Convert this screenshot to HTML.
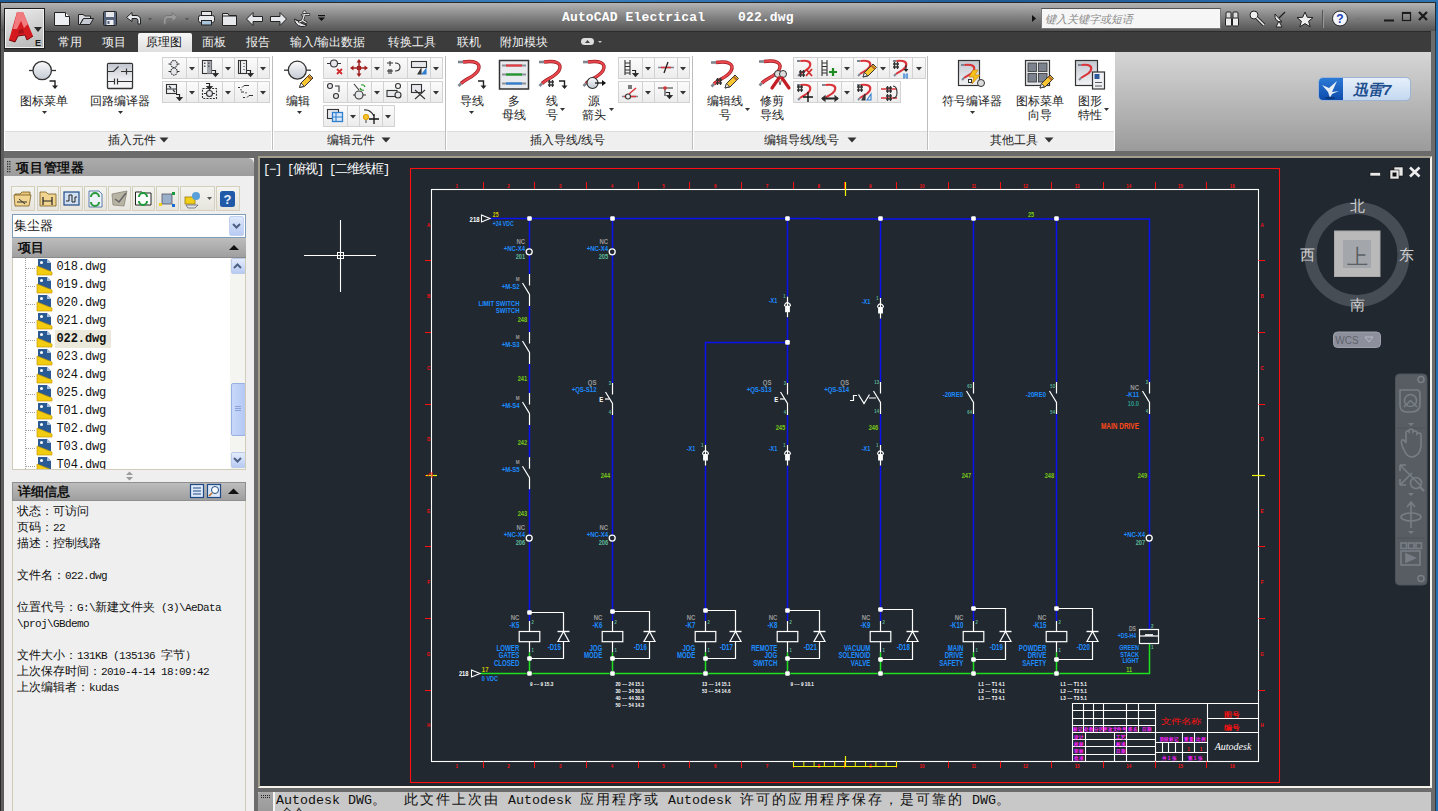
<!DOCTYPE html>
<html><head><meta charset="utf-8">
<style>
*{box-sizing:border-box;margin:0;padding:0}
html,body{width:1438px;height:811px;overflow:hidden;background:#6b6b6b;font-family:"Liberation Sans",sans-serif;}
.a{position:absolute}
#winbg{left:0;top:0;width:1438px;height:2px;background:linear-gradient(90deg,#1d5a96,#3b7fbf 40%,#1d5a96 70%,#2f73b3)}
#title{left:0;top:2px;width:1436px;height:29px;background:linear-gradient(#b4b4b4,#828282 50%,#545454);border-top:1px solid #2a2a2a;border-left:1px solid #2a2a2a;border-right:1px solid #2a2a2a}
#tabs{left:0;top:31px;width:1438px;height:21px;background:#3c3c3c;border-top:1px solid #2c2c2c}
#ribbon{left:4px;top:52px;width:1111px;height:99px;background:#fff}
#ribgray{left:1115px;top:52px;width:316px;height:99px;background:linear-gradient(#d6d6d6,#9b9b9b)}
#rbframe{left:1431px;top:31px;width:7px;height:780px;background:linear-gradient(90deg,#6b6b6b 0,#6b6b6b 4px,#3a3a3a 4px,#3a3a3a 5px,#1f6fb8 5px)}
#leftedge{left:0;top:31px;width:4px;height:780px;background:#5e5e5e;border-left:1px solid #2a2a2a}
.pband{top:131px;height:19px;background:#efefef;border-top:1px solid #dcdcdc;color:#222;font-size:12px;line-height:18px;text-align:center}
.psep{top:56px;width:1px;height:94px;background:#bdbdbd}
#pal{left:4px;top:158px;width:250px;height:653px;background:#efefef}
#dwg{left:258px;top:156px;width:1174px;height:632px;background:#212830;border:2px solid #a39f8f;border-bottom-color:#f4f2ea;border-right-color:#f4f2ea}
#cmd{left:258px;top:792px;width:1173px;height:19px;background:#c8c8c8}
.tab{top:34px;font-size:12px;line-height:16px;color:#f0f0f0;white-space:nowrap}
.ptitle{top:132px;font-size:12px;line-height:17px;color:#222;white-space:nowrap}
.cell{background:linear-gradient(#fbfbfb,#ececec);border:1px solid #d2d2d2}
.blbl{width:120px;text-align:center;font-size:12px;line-height:14px;color:#222;white-space:nowrap}
.dl{font-size:12px;line-height:16px;color:#111;white-space:nowrap}
.m{font-family:"Liberation Mono",monospace;font-size:11px;letter-spacing:-.6px}
.cm{font-family:"Liberation Mono",monospace;font-size:13.33px}
.ck{font-size:14px;letter-spacing:2px}
.cmdl{line-height:17px;color:#111;white-space:pre;font-family:"Liberation Mono",monospace}
.vm{font-family:"Liberation Mono",monospace;font-size:12px;letter-spacing:-1.2px}
.vk{font-size:13px;letter-spacing:-1px}
</style></head><body>
<div class="a" style="left:1436px;top:0;width:2px;height:811px;background:#1f6fb8"></div><div id="winbg" class="a"></div>
<div id="title" class="a"></div>
<div id="tabs" class="a"></div>
<div id="leftedge" class="a"></div>
<!-- app button -->
<div class="a" style="left:4px;top:8px;width:41px;height:41px;background:linear-gradient(160deg,#ececec 0%,#d4d4d4 45%,#b4b4b4 100%);border:1px solid #1e1e1e;box-shadow:inset 0 0 0 1px #f0f0f0">
<svg width="39" height="39" style="position:absolute;left:0;top:0">
<path d="M12,3 L18,3 L28,27 L22,31 L20,26 L13,27 L10,33 L4,31 Z" fill="#d41a1f"/>
<path d="M12,3 L18,3 L23,15 L19,19 L16,12 L12,20 L8,20 Z" fill="#f07a7e"/>
<path d="M14,21 L18,20 L19,24 L13,25 Z" fill="#a51217"/>
<path d="M4,31 L10,33 L13,27 L20,26 L22,31 L28,27" fill="none" stroke="#7a0a0e" stroke-width="1"/>
<path d="M29,18 H37 L33,23 Z" fill="#2a2a2a"/>
<text x="30" y="37" font-family="Liberation Sans" font-weight="bold" font-size="9" fill="#1a1a1a">E</text>
</svg></div>
<svg class="a" style="left:50px;top:8px" width="280" height="22">
<!-- new -->
<path d="M4.5,4.5 H15.5 L19.5,8.5 V17.5 H4.5 Z" fill="#eceef2" stroke="#222" stroke-width="1"/>
<path d="M15.5,4.5 V8.5 H19.5" fill="#fff" stroke="#222"/>
<!-- open -->
<path d="M28.5,6.5 H33 L35,8 H40.5 V11 H33 L30,16.5 H28.5 Z" fill="#d8dbe0" stroke="#222"/>
<path d="M30,16.5 L33.5,10.5 H43.5 L40,16.5 Z" fill="#c6cad2" stroke="#222"/>
<!-- save -->
<rect x="53.5" y="3.5" width="13" height="14" rx="1" fill="#56637a" stroke="#222"/>
<rect x="56" y="4" width="8" height="5" fill="#e6e8ec"/>
<rect x="56.5" y="12" width="7" height="5" fill="#eef0f3"/>
<rect x="57.5" y="13" width="2" height="3" fill="#56637a"/>
<!-- undo -->
<path d="M76.5,9.5 L82,4.5 V7.5 H86 Q90.5,7.5 90.5,12 V16 H88 V12.5 Q88,10.5 86,10.5 H82 V13.5 Z" fill="#e6e8ec" stroke="#222"/>
<path d="M98,10 L102,10 L100,12.5Z" fill="#555"/>
<!-- redo gray -->
<path d="M127.5,9.5 L122,4.5 V7.5 H118 Q113.5,7.5 113.5,12 V16 H116 V12.5 Q116,10.5 118,10.5 H122 V13.5 Z" fill="#9a9a9a" stroke="#777"/>
<path d="M135,10 L139,10 L137,12.5Z" fill="#555"/>
<!-- plot -->
<rect x="151.5" y="3.5" width="10" height="4" fill="#e6e8ec" stroke="#222"/>
<rect x="148.5" y="7.5" width="16" height="7" rx="2" fill="#e6e8ec" stroke="#222"/>
<rect x="151.5" y="12.5" width="10" height="4.5" fill="#a8c4da" stroke="#222"/>
<!-- folder -->
<path d="M172.5,5.5 H178 L179,7.5 H186.5 V17.5 H172.5 Z" fill="#e6e8ec" stroke="#222"/>
<line x1="173" y1="8" x2="186" y2="8" stroke="#222"/>
<!-- back -->
<path d="M196.5,11 L203,4.5 V8.5 H212.5 V13.5 H203 V17.5 Z" fill="#e6e8ec" stroke="#222"/>
<!-- forward -->
<path d="M236.5,11 L230,4.5 V8.5 H220.5 V13.5 H230 V17.5 Z" fill="#e6e8ec" stroke="#222"/>
<!-- surfer -->
<path d="M244.5,11 Q245,17 251,18.5 Q255,19 257,17 Q251,16 248,13 Q246,11 244.5,11Z" fill="#e6e8ec" stroke="#222" stroke-width="1"/>
<path d="M246,12.5 Q249,12 251,14" stroke="#222" stroke-width=".8" fill="none"/>
<circle cx="254.5" cy="4.5" r="1.7" fill="#eee" stroke="#222" stroke-width=".8"/>
<path d="M252,7 L259,6.5 M254.5,6.5 L252.5,12.5 L256,14.5 M252.5,12.5 L249.5,14" stroke="#222" stroke-width="2.6" fill="none" stroke-linecap="round"/>
<path d="M252,7 L259,6.5 M254.5,6.5 L252.5,12.5 L256,14.5 M252.5,12.5 L249.5,14" stroke="#eee" stroke-width="1.2" fill="none" stroke-linecap="round"/>
<!-- dropdown -->
<rect x="268" y="7" width="7" height="1.2" fill="#111"/>
<path d="M268,9.5 H275 L271.5,13Z" fill="#111"/>
</svg>
<div class="a" style="left:562px;top:10px;letter-spacing:.15px;font-family:'Liberation Mono',monospace;font-weight:bold;font-size:13px;color:#fff;line-height:16px;white-space:pre">AutoCAD Electrical</div>
<div class="a" style="left:738px;top:10px;letter-spacing:.15px;font-family:'Liberation Mono',monospace;font-weight:bold;font-size:13px;color:#fff;line-height:16px;white-space:pre">022.dwg</div>
<svg class="a" style="left:1030px;top:12px" width="8" height="12"><path d="M2,3 L6,6.5 L2,10Z" fill="#111"/></svg>
<div class="a" style="left:1041px;top:8px;width:180px;height:21px;background:#f6f6f6;border:1px solid #7a7a7a;border-top-color:#555"></div>
<div class="a" style="left:1045px;top:12px;font-size:11px;line-height:15px;color:#8a8a8a;font-style:italic">键入关键字或短语</div>
<svg class="a" style="left:1222px;top:8px" width="216" height="22">
<!-- binoculars -->
<rect x="4" y="4" width="5" height="7" rx="1" fill="#ddd" stroke="#222"/>
<rect x="11" y="4" width="5" height="7" rx="1" fill="#ddd" stroke="#222"/>
<rect x="3.5" y="10" width="6" height="8" rx="1" fill="#eee" stroke="#222"/>
<rect x="10.5" y="10" width="6" height="8" rx="1" fill="#eee" stroke="#222"/>
<!-- key -->
<circle cx="32" cy="7" r="4" fill="#eee" stroke="#222"/>
<path d="M34.5,9.5 L42,17" stroke="#222" stroke-width="3.2"/>
<path d="M34.5,9.5 L42,17" stroke="#eee" stroke-width="1.6"/>
<!-- satellite -->
<path d="M53,6 Q52,14 60,14 Z" fill="#eee" stroke="#222"/>
<path d="M57,10 L63,4" stroke="#222" stroke-width="1.2"/>
<path d="M54,19 L57,13 L60,19Z" fill="#eee" stroke="#222"/>
<!-- star -->
<path d="M83,4 L85.3,9.3 L91,9.6 L86.6,13.2 L88.2,18.8 L83,15.6 L77.8,18.8 L79.4,13.2 L75,9.6 L80.7,9.3Z" fill="#eee" stroke="#222"/>
<line x1="100.5" y1="2" x2="100.5" y2="20" stroke="#555"/>
<line x1="101.5" y1="2" x2="101.5" y2="20" stroke="#999"/>
<!-- help -->
<circle cx="118" cy="10.5" r="7.5" fill="#f4f6fb" stroke="#222"/>
<text x="118" y="15" text-anchor="middle" font-family="Liberation Sans" font-weight="bold" font-size="12" fill="#1a3fb5">?</text>
<path d="M134,10 H139 L136.5,12.5Z" fill="#777"/>
<!-- min max close -->
<rect x="162" y="11.5" width="10" height="2" fill="#1a1a1a"/>
<rect x="180.5" y="4.5" width="8" height="8" fill="none" stroke="#1a1a1a" stroke-width="1.2"/>
<rect x="180" y="4" width="9" height="2" fill="#1a1a1a"/>
<path d="M197,4 L205,12 M205,4 L197,12" stroke="#1a1a1a" stroke-width="2.2"/>
</svg>
<!-- tabs -->
<div class="a" style="left:138px;top:33px;width:54px;height:19px;background:linear-gradient(#f7f7f7,#dedede);border-radius:2px 2px 0 0"></div>
<div class="a tab" style="left:58px">常用</div>
<div class="a tab" style="left:102px">项目</div>
<div class="a tab" style="left:146px;color:#111">原理图</div>
<div class="a tab" style="left:202px">面板</div>
<div class="a tab" style="left:246px">报告</div>
<div class="a tab" style="left:290px">输入/输出数据</div>
<div class="a tab" style="left:388px">转换工具</div>
<div class="a tab" style="left:457px">联机</div>
<div class="a tab" style="left:500px">附加模块</div>
<svg class="a" style="left:578px;top:36px" width="28" height="12"><rect x="3" y="2" width="13" height="7" rx="3.5" fill="#ddd"/><path d="M7,7 L9.5,4 L12,7Z" fill="#444"/><path d="M20,5 H24 L22,7Z" fill="#ccc"/></svg>

<div id="ribbon" class="a"></div>
<div id="ribgray" class="a"></div>
<!--RIBBON-->
<div class="a pband" style="left:5px;width:266px"></div>
<div class="a pband" style="left:274px;width:171px"></div>
<div class="a pband" style="left:447px;width:245px"></div>
<div class="a pband" style="left:694px;width:233px"></div>
<div class="a pband" style="left:929px;width:185px"></div>
<div class="a psep" style="left:272px"></div>
<div class="a psep" style="left:445px"></div>
<div class="a psep" style="left:692px"></div>
<div class="a psep" style="left:927px"></div>
<div class="a ptitle" style="left:108px">插入元件</div>
<svg class="a" style="left:159px;top:137px" width="10" height="6"><path d="M0.5,0.5 H9.5 L5,5.5Z" fill="#333"/></svg>
<div class="a ptitle" style="left:327px">编辑元件</div>
<svg class="a" style="left:381px;top:137px" width="10" height="6"><path d="M0.5,0.5 H9.5 L5,5.5Z" fill="#333"/></svg>
<div class="a ptitle" style="left:530px">插入导线/线号</div>
<div class="a ptitle" style="left:764px">编辑导线/线号</div>
<svg class="a" style="left:847px;top:137px" width="10" height="6"><path d="M0.5,0.5 H9.5 L5,5.5Z" fill="#333"/></svg>
<div class="a ptitle" style="left:990px">其他工具</div>
<svg class="a" style="left:1044px;top:137px" width="10" height="6"><path d="M0.5,0.5 H9.5 L5,5.5Z" fill="#333"/></svg>
<div class="a cell" style="left:162px;top:57px;width:25px;height:22px"></div>
<div class="a cell" style="left:186px;top:57px;width:13px;height:22px"></div>
<svg class="a" style="left:189.0px;top:66.5px" width="7" height="5"><path d="M0,0 H6 L3,3.5Z" fill="#333"/></svg>
<div class="a cell" style="left:198px;top:57px;width:25px;height:22px"></div>
<div class="a cell" style="left:222px;top:57px;width:13px;height:22px"></div>
<svg class="a" style="left:225.0px;top:66.5px" width="7" height="5"><path d="M0,0 H6 L3,3.5Z" fill="#333"/></svg>
<div class="a cell" style="left:234px;top:57px;width:24px;height:22px"></div>
<div class="a cell" style="left:257px;top:57px;width:13px;height:22px"></div>
<svg class="a" style="left:260.0px;top:66.5px" width="7" height="5"><path d="M0,0 H6 L3,3.5Z" fill="#333"/></svg>
<div class="a cell" style="left:162px;top:81px;width:25px;height:22px"></div>
<div class="a cell" style="left:186px;top:81px;width:13px;height:22px"></div>
<svg class="a" style="left:189.0px;top:90.5px" width="7" height="5"><path d="M0,0 H6 L3,3.5Z" fill="#333"/></svg>
<div class="a cell" style="left:198px;top:81px;width:25px;height:22px"></div>
<div class="a cell" style="left:222px;top:81px;width:13px;height:22px"></div>
<svg class="a" style="left:225.0px;top:90.5px" width="7" height="5"><path d="M0,0 H6 L3,3.5Z" fill="#333"/></svg>
<div class="a cell" style="left:234px;top:81px;width:24px;height:22px"></div>
<div class="a cell" style="left:257px;top:81px;width:13px;height:22px"></div>
<svg class="a" style="left:260.0px;top:90.5px" width="7" height="5"><path d="M0,0 H6 L3,3.5Z" fill="#333"/></svg>
<div class="a cell" style="left:323px;top:57px;width:25px;height:22px"></div>
<div class="a cell" style="left:347px;top:57px;width:25px;height:22px"></div>
<div class="a cell" style="left:371px;top:57px;width:13px;height:22px"></div>
<svg class="a" style="left:374.0px;top:66.5px" width="7" height="5"><path d="M0,0 H6 L3,3.5Z" fill="#333"/></svg>
<div class="a cell" style="left:383px;top:57px;width:25px;height:22px"></div>
<div class="a cell" style="left:407px;top:57px;width:24px;height:22px"></div>
<div class="a cell" style="left:430px;top:57px;width:13px;height:22px"></div>
<svg class="a" style="left:433.0px;top:66.5px" width="7" height="5"><path d="M0,0 H6 L3,3.5Z" fill="#333"/></svg>
<div class="a cell" style="left:323px;top:81px;width:25px;height:22px"></div>
<div class="a cell" style="left:347px;top:81px;width:25px;height:22px"></div>
<div class="a cell" style="left:371px;top:81px;width:13px;height:22px"></div>
<svg class="a" style="left:374.0px;top:90.5px" width="7" height="5"><path d="M0,0 H6 L3,3.5Z" fill="#333"/></svg>
<div class="a cell" style="left:383px;top:81px;width:25px;height:22px"></div>
<div class="a cell" style="left:407px;top:81px;width:24px;height:22px"></div>
<div class="a cell" style="left:430px;top:81px;width:13px;height:22px"></div>
<svg class="a" style="left:433.0px;top:90.5px" width="7" height="5"><path d="M0,0 H6 L3,3.5Z" fill="#333"/></svg>
<div class="a cell" style="left:323px;top:105px;width:25px;height:22px"></div>
<div class="a cell" style="left:347px;top:105px;width:13px;height:22px"></div>
<svg class="a" style="left:350.0px;top:114.5px" width="7" height="5"><path d="M0,0 H6 L3,3.5Z" fill="#333"/></svg>
<div class="a cell" style="left:359px;top:105px;width:24px;height:22px"></div>
<div class="a cell" style="left:382px;top:105px;width:13px;height:22px"></div>
<svg class="a" style="left:385.0px;top:114.5px" width="7" height="5"><path d="M0,0 H6 L3,3.5Z" fill="#333"/></svg>
<div class="a cell" style="left:618px;top:57px;width:25px;height:22px"></div>
<div class="a cell" style="left:642px;top:57px;width:13px;height:22px"></div>
<svg class="a" style="left:645.0px;top:66.5px" width="7" height="5"><path d="M0,0 H6 L3,3.5Z" fill="#333"/></svg>
<div class="a cell" style="left:654px;top:57px;width:24px;height:22px"></div>
<div class="a cell" style="left:677px;top:57px;width:13px;height:22px"></div>
<svg class="a" style="left:680.0px;top:66.5px" width="7" height="5"><path d="M0,0 H6 L3,3.5Z" fill="#333"/></svg>
<div class="a cell" style="left:618px;top:81px;width:25px;height:22px"></div>
<div class="a cell" style="left:642px;top:81px;width:13px;height:22px"></div>
<svg class="a" style="left:645.0px;top:90.5px" width="7" height="5"><path d="M0,0 H6 L3,3.5Z" fill="#333"/></svg>
<div class="a cell" style="left:654px;top:81px;width:24px;height:22px"></div>
<div class="a cell" style="left:677px;top:81px;width:13px;height:22px"></div>
<svg class="a" style="left:680.0px;top:90.5px" width="7" height="5"><path d="M0,0 H6 L3,3.5Z" fill="#333"/></svg>
<div class="a cell" style="left:793px;top:57px;width:25px;height:22px"></div>
<div class="a cell" style="left:817px;top:57px;width:25px;height:22px"></div>
<div class="a cell" style="left:841px;top:57px;width:13px;height:22px"></div>
<svg class="a" style="left:844.0px;top:66.5px" width="7" height="5"><path d="M0,0 H6 L3,3.5Z" fill="#333"/></svg>
<div class="a cell" style="left:853px;top:57px;width:25px;height:22px"></div>
<div class="a cell" style="left:877px;top:57px;width:13px;height:22px"></div>
<svg class="a" style="left:880.0px;top:66.5px" width="7" height="5"><path d="M0,0 H6 L3,3.5Z" fill="#333"/></svg>
<div class="a cell" style="left:889px;top:57px;width:24px;height:22px"></div>
<div class="a cell" style="left:912px;top:57px;width:14px;height:22px"></div>
<svg class="a" style="left:915.5px;top:66.5px" width="7" height="5"><path d="M0,0 H6 L3,3.5Z" fill="#333"/></svg>
<div class="a cell" style="left:793px;top:81px;width:25px;height:22px"></div>
<div class="a cell" style="left:817px;top:81px;width:25px;height:22px"></div>
<div class="a cell" style="left:841px;top:81px;width:13px;height:22px"></div>
<svg class="a" style="left:844.0px;top:90.5px" width="7" height="5"><path d="M0,0 H6 L3,3.5Z" fill="#333"/></svg>
<div class="a cell" style="left:853px;top:81px;width:25px;height:22px"></div>
<div class="a cell" style="left:877px;top:81px;width:24px;height:22px"></div>
<div class="a blbl" style="left:-16px;top:94px">图标菜单</div>
<svg class="a" style="left:41.5px;top:111px" width="6" height="4"><path d="M0,0 H5 L2.5,3Z" fill="#333"/></svg>
<div class="a blbl" style="left:60px;top:94px">回路编译器</div>
<svg class="a" style="left:117.5px;top:111px" width="6" height="4"><path d="M0,0 H5 L2.5,3Z" fill="#333"/></svg>
<div class="a blbl" style="left:238px;top:94px">编辑</div>
<svg class="a" style="left:296.5px;top:111px" width="6" height="4"><path d="M0,0 H5 L2.5,3Z" fill="#333"/></svg>
<div class="a blbl" style="left:412px;top:94px">导线</div>
<svg class="a" style="left:469px;top:111px" width="6" height="4"><path d="M0,0 H5 L2.5,3Z" fill="#333"/></svg>
<div class="a blbl" style="left:453.5px;top:94px">多</div>
<div class="a blbl" style="left:453.5px;top:108px">母线</div>
<div class="a blbl" style="left:491.5px;top:94px">线</div>
<div class="a blbl" style="left:491.5px;top:108px">号</div>
<svg class="a" style="left:560px;top:108px" width="6" height="4"><path d="M0,0 H5 L2.5,3Z" fill="#333"/></svg>
<div class="a blbl" style="left:534px;top:94px">源</div>
<div class="a blbl" style="left:534px;top:108px">箭头</div>
<svg class="a" style="left:609px;top:108px" width="6" height="4"><path d="M0,0 H5 L2.5,3Z" fill="#333"/></svg>
<div class="a blbl" style="left:664.5px;top:94px">编辑线</div>
<div class="a blbl" style="left:665px;top:108px">号</div>
<svg class="a" style="left:745px;top:108px" width="6" height="4"><path d="M0,0 H5 L2.5,3Z" fill="#333"/></svg>
<div class="a blbl" style="left:712px;top:94px">修剪</div>
<div class="a blbl" style="left:712px;top:108px">导线</div>
<div class="a blbl" style="left:911.5px;top:94px">符号编译器</div>
<svg class="a" style="left:969.5px;top:111px" width="6" height="4"><path d="M0,0 H5 L2.5,3Z" fill="#333"/></svg>
<div class="a blbl" style="left:980px;top:94px">图标菜单</div>
<div class="a blbl" style="left:980px;top:108px">向导</div>
<div class="a blbl" style="left:1029.5px;top:94px">图形</div>
<div class="a blbl" style="left:1029.5px;top:108px">特性</div>
<svg class="a" style="left:1104px;top:108px" width="6" height="4"><path d="M0,0 H5 L2.5,3Z" fill="#333"/></svg>
<!--RIBICONS--><svg class="a" style="left:0;top:0;pointer-events:none" width="1438" height="152">
<defs>
<linearGradient id="gcirc" x1="0" y1="0" x2="0" y2="1"><stop offset="0" stop-color="#fafbfc"/><stop offset="1" stop-color="#c4c9d3"/></linearGradient>
<linearGradient id="gbox" x1="0" y1="0" x2="0" y2="1"><stop offset="0" stop-color="#c3c7d0"/><stop offset="1" stop-color="#f2f3f5"/></linearGradient>
<g id="wB">
<path d="M0,1.5 H5" stroke="#7d8590" stroke-width="2.6" fill="none"/>
<path d="M5,1.5 C 16,0 24,2 20,10 C 17,16 8,18 3,23" stroke="#9e1b20" stroke-width="3.4" fill="none"/>
<path d="M5,1.5 C 16,0 24,2 20,10 C 17,16 8,18 3,23" stroke="#e8474d" stroke-width="2" fill="none"/>
<path d="M3,23 L0.5,25.5" stroke="#7d8590" stroke-width="2.6"/>
</g>
<g id="wS">
<path d="M0,1 H3.5" stroke="#7d8590" stroke-width="2" fill="none"/>
<path d="M3.5,1 C 11,0 15,2 12.5,7 C 10.5,10.5 6,11.5 3,14" stroke="#d9343a" stroke-width="2.2" fill="none"/>
<path d="M3,14 L1,16" stroke="#7d8590" stroke-width="2"/>
</g>
<g id="arr"><path d="M0,0.5 H5.5 V6" stroke="#222" stroke-width="1.4" fill="none"/><path d="M2.5,5 H8.5 L5.5,8.5Z" fill="#222"/></g>
<g id="arrS"><path d="M0,0.5 H3.5 V4" stroke="#222" stroke-width="1.2" fill="none"/><path d="M1,3.5 H6 L3.5,6.5Z" fill="#222"/></g>
<g id="pen"><path d="M0,13 L1.5,8.5 L10,0 L13.5,3.5 L5,12 Z" fill="#f7c531" stroke="#333" stroke-width="1"/><path d="M0,13 L1.5,8.5 L4.5,11.5Z" fill="#eee" stroke="#333" stroke-width=".8"/><path d="M8.5,1.5 L12,5" stroke="#b36a2a" stroke-width="2"/></g>
<g id="hash"><path d="M1.5,0 V7 M4.5,0 V7 M0,2 H6 M0,5 H6" stroke="#333" stroke-width="1.3"/></g>
</defs>
<!-- 图标菜单 -->
<line x1="29" y1="70.5" x2="33" y2="70.5" stroke="#333" stroke-width="1.3"/>
<line x1="51.5" y1="70.5" x2="56" y2="70.5" stroke="#333" stroke-width="1.3"/>
<circle cx="42.2" cy="70.5" r="9.2" fill="url(#gcirc)" stroke="#333" stroke-width="1.3"/>
<use href="#arr" x="49.5" y="80.5"/>
<!-- 回路编译器 -->
<rect x="107.5" y="63.5" width="25" height="25" rx="1" fill="#f4f5f7" stroke="#333" stroke-width="1.3"/>
<rect x="108.2" y="64.2" width="23.6" height="17.3" fill="url(#gbox)"/>
<path d="M108,71.5 H113.5 L118.5,66.5 M121,71.5 H132 M126.5,68.5 V74.5 M108,81.5 H114.5 M114.5,78.5 V84.5 M117.5,78.5 V84.5 M117.5,81.5 H132" stroke="#333" stroke-width="1.2" fill="none"/>
<!-- 编辑 -->
<line x1="284" y1="70.2" x2="288.5" y2="70.2" stroke="#333" stroke-width="1.3"/>
<line x1="306" y1="70.2" x2="311" y2="70.2" stroke="#333" stroke-width="1.3"/>
<circle cx="297.3" cy="70.2" r="9" fill="url(#gcirc)" stroke="#333" stroke-width="1.3"/>
<use href="#pen" x="299.5" y="74.5"/>
<!-- 导线 -->
<use href="#wB" x="458" y="60.5"/>
<use href="#arr" x="478" y="80.5"/>
<!-- 多母线 -->
<rect x="499.5" y="60.5" width="29" height="28.5" fill="#e8eaee" stroke="#333" stroke-width="1.5"/>
<path d="M502,65.5 H526 M502,74.5 H526 M502,83.5 H526" stroke="#8a9098" stroke-width="2.2"/>
<path d="M506,65.5 H522" stroke="#e23b40" stroke-width="2.2"/>
<path d="M506,74.5 H522" stroke="#1f9a2a" stroke-width="2.2"/>
<path d="M506,83.5 H522" stroke="#2f7fd0" stroke-width="2.2"/>
<!-- 线号 -->
<use href="#wB" x="539" y="60.5"/>
<use href="#hash" x="548" y="80"/>
<use href="#arr" x="559" y="80.5"/>
<!-- 源箭头 -->
<use href="#wB" x="583" y="60.5"/>
<circle cx="592.5" cy="83" r="5.5" fill="url(#gcirc)" stroke="#333" stroke-width="1.2"/>
<path d="M595,83 H603" stroke="#111" stroke-width="1.3"/><path d="M602,80 L606,83 L602,86Z" fill="#111"/>
<!-- 编辑线号 -->
<use href="#wB" x="711" y="61"/>
<use href="#hash" x="716" y="78"/>
<use href="#pen" x="725" y="75"/>
<!-- 修剪导线 -->
<use href="#wB" x="759" y="60"/>
<path d="M776,71 L780,85 M784,71 L780,85" stroke="#666" stroke-width="1"/>
<circle cx="778" cy="74" r="3.5" fill="#ddd" stroke="#333"/><circle cx="783" cy="74" r="3.5" fill="#ddd" stroke="#333"/>
<path d="M779,78 L772,88 M782,78 L789,88" stroke="#c41e24" stroke-width="3.2" stroke-linecap="round"/>
<!-- 符号编译器 -->
<rect x="958.5" y="60.5" width="21" height="25" fill="url(#gbox)" stroke="#333" stroke-width="1.2" transform="scale(1,1)"/>
<use href="#wS" x="961" y="64"/>
<path d="M973,70 L978,70 L975,75 L980,75 L972,84 L974,77 L969,77Z" fill="#f6c21c" stroke="#c47a00" stroke-width=".6"/>
<rect x="968.5" y="79.5" width="3" height="3" fill="#fff" stroke="#333"/>
<circle cx="981" cy="83" r="3.5" fill="#ddd" stroke="#333"/>
<!-- 图标菜单向导 -->
<rect x="1025.5" y="60.5" width="24" height="25" fill="#e6e8ec" stroke="#333" stroke-width="1.2"/>
<rect x="1028" y="63" width="8.5" height="8.5" fill="#7d838e" stroke="#333" stroke-width=".8"/>
<rect x="1038.5" y="63" width="8.5" height="8.5" fill="#7d838e" stroke="#333" stroke-width=".8"/>
<rect x="1028" y="73.5" width="8.5" height="8.5" fill="#7d838e" stroke="#333" stroke-width=".8"/>
<rect x="1038.5" y="73.5" width="8.5" height="8.5" fill="#7d838e" stroke="#333" stroke-width=".8"/>
<use href="#pen" x="1040" y="75"/>
<!-- 图形特性 -->
<rect x="1075.5" y="60.5" width="22" height="25" fill="url(#gbox)" stroke="#333" stroke-width="1.2"/>
<use href="#wS" x="1078" y="64"/>
<rect x="1092.5" y="72" width="12" height="17" fill="#eef0f3" stroke="#333" stroke-width="1.2"/>
<rect x="1094.5" y="74" width="5" height="5" fill="#2d5a9a"/>
<path d="M1095,82.5 H1102 M1095,86 H1102" stroke="#333" stroke-width=".8"/>

<!-- small icons panel 1 -->
<g stroke="#333" stroke-width="1.1" fill="none">
<ellipse cx="174" cy="64" rx="3.2" ry="3.6" fill="#e6e8ec" stroke-dasharray="1.5,.8"/><ellipse cx="174" cy="71.5" rx="3.2" ry="3.6" fill="#e6e8ec" stroke-dasharray="1.5,.8"/>
<path d="M168.5,64 H171 M177,64 H179.5 M168.5,71.5 H171 M177,71.5 H179.5"/>
<rect x="202.5" y="60.5" width="9" height="13" fill="#eef0f2"/><rect x="207" y="61" width="4.5" height="12.5" fill="#a4a8ae" stroke="none"/>
<rect x="204" y="62.5" width="1.5" height="1.5" fill="#555" stroke="none"/><rect x="208" y="62.5" width="1.5" height="1.5" fill="#555" stroke="none"/><rect x="204" y="65.5" width="1.5" height="1.5" fill="#555" stroke="none"/><rect x="208" y="65.5" width="1.5" height="1.5" fill="#555" stroke="none"/>
<use href="#arrS" x="212" y="70"/>
<rect x="238.5" y="60.5" width="8" height="13" fill="#eef0f2"/><path d="M240.5,61 V73 M244,63 V64 M244,66 V67 M244,69 V70"/>
<use href="#arrS" x="247" y="70"/>
<rect x="166.5" y="84.5" width="10" height="9" fill="#eef0f2"/><path d="M167,89 H176 M169,86 L171,88 M173,90 L175,92"/>
<use href="#arrS" x="176" y="94"/>
<rect x="202.5" y="88.5" width="14" height="10" stroke-dasharray="2,1.2"/><circle cx="209.5" cy="93.5" r="3" fill="#e6e8ec"/><path d="M204,93.5 H206.5 M212.5,93.5 H215"/>
<use href="#arrS" x="206" y="83"/>
<path d="M238,87.5 H240 M242,87.5 L244,85.5 H249 M241,89 V90.5 M241,92 H244 M246,92 V93.5 M243,97.5 H245 M247,97.5 L249,95.5 H253" stroke-width="1"/>
</g>
<!-- small icons panel 2 -->
<g stroke="#333" stroke-width="1.1" fill="none">
<circle cx="334" cy="63.5" r="3.5" fill="#e6e8ec"/><path d="M327,63.5 H330 M338,63.5 H341"/>
<path d="M337,69 L342,74 M342,69 L337,74" stroke="#d02a2a" stroke-width="1.8"/>
<path d="M359,61 V75 M352,68 H366" stroke="#a01e1e" stroke-width="1.5"/><path d="M359,59 L356.5,62.5 H361.5Z M359,77 L356.5,73.5 H361.5Z M350,68 L353.5,65.5 V70.5Z M368,68 L364.5,65.5 V70.5Z" fill="#a01e1e" stroke="none"/><rect x="357.5" y="66.5" width="3" height="3" stroke="#a01e1e"/>
<path d="M387,63 H393 M390,61 V66 M387,71 H393 M389,69 V74 M391,69 V74 M395,63 Q400,63 400,67 Q400,71 395,71"/>
<rect x="411.5" y="61.5" width="15" height="6" fill="#e6e8ec"/><path d="M418,74 L421,69 V74Z" fill="#444"/><path d="M422,74 L426,69 V74Z" fill="#2f7fd0" stroke="#2f7fd0"/>
<circle cx="330" cy="86" r="2.5" fill="#e6e8ec"/><circle cx="336" cy="96" r="2.5" fill="#e6e8ec"/><path d="M335,86 H339 V92"/>
<circle cx="359" cy="95" r="4" fill="#e6e8ec"/><path d="M353,95 H355 M363,95 H366 M354,84 L359,90" /><path d="M361,85 Q364,84 365,87 M364,90 Q361,91 360,88" stroke="#2a9a2a" stroke-width="1.2"/>
<rect x="387" y="90.5" width="10" height="6" fill="#e6e8ec"/><circle cx="398" cy="95" r="3" fill="#e6e8ec"/><circle cx="398" cy="86" r="2.5"/>
<rect x="411.5" y="84.5" width="10" height="8" fill="#e6e8ec"/><path d="M415,90 L425,99 M425,90 L415,99"/>
<rect x="327.5" y="109.5" width="11" height="9" fill="#e6e8ec"/><rect x="332.5" y="112.5" width="10" height="9" fill="#d8e8f8" stroke="#2f7fd0" stroke-width="1.3"/><path d="M333,117 H342 M336,113 V121" stroke="#2f7fd0"/>
<path d="M364,110 Q370,109 374,116" /><circle cx="366" cy="117" r="2.5" fill="#f7c531" stroke="#e0a000"/><path d="M366,120 V123" stroke="#999" stroke-width="2"/>
<path d="M374,114 V124 M369,119 H379" stroke="#111" stroke-width="1.3"/>
</g>
<!-- small icons panel 3 -->
<g stroke="#333" stroke-width="1.1" fill="none">
<path d="M625,60 V75 M630,60 V75 M625,63 H630 M625,66.5 H630 M625,70 H630 M625,73 H630"/><use href="#arrS" x="632" y="70" />
<path d="M658,67.5 H674" stroke="#7d8590" stroke-width="1.5"/><path d="M661,67.5 H671" stroke="#d9343a" stroke-width="1.5"/><path d="M664,73 L668,62" stroke="#222" stroke-width="1.3"/>
<path d="M622,96.5 H638" stroke="#7d8590" stroke-width="1.5"/><path d="M624,96.5 H636" stroke="#d9343a" stroke-width="1.5"/><circle cx="628" cy="96.5" r="2.5" fill="#eee"/><path d="M629,94 L636,88" stroke="#d9343a" stroke-width="1.5"/>
<path d="M629,85 V89 M631,85 V89 M628,86 H632 M628,88 H632" stroke-width=".8"/>
<path d="M658,88 H673 M665,88 V96" stroke="#333"/><circle cx="665" cy="88" r="1.8" fill="#d9343a" stroke="none"/><use href="#arrS" x="666" y="92"/>
</g>
<!-- small icons panel 4 -->
<g stroke="#333" stroke-width="1.1" fill="none">
<use href="#wS" x="797" y="60"/><use href="#hash" x="799" y="70"/><path d="M806,69 L812,76 M812,69 L806,76" stroke="#d02a2a" stroke-width="1.8"/>
<path d="M822,60 V76 M827,60 V76 M822,63 H827 M822,66.5 H827 M822,70 H827 M822,73 H827"/><path d="M833,68 V76 M829,72 H837" stroke="#1f8a1f" stroke-width="2.2"/>
<use href="#wS" x="857" y="60"/><use href="#pen" x="863" y="64" transform=""/>
<use href="#wS" x="893" y="60"/><use href="#hash" x="893" y="62"/><path d="M906,65 V71" stroke="#222"/><path d="M903.5,69 H908.5 L906,72Z" fill="#222" stroke="none"/><path d="M904,73 V79 M907,73 V79 M903,75 H908 M903,77 H908" stroke="#2f7fd0" stroke-width=".9"/>
<use href="#wS" x="797" y="84"/><use href="#hash" x="797" y="85"/><path d="M808,92 V102 M803,97 H813" stroke="#111" stroke-width="1.4"/>
<use href="#wS" x="822" y="84"/><path d="M822,98.5 H838" stroke="#222" stroke-width="2"/><path d="M822,98.5 L825,96 V101Z M838,98.5 L835,96 V101Z" fill="#222"/>
<use href="#wS" x="857" y="84"/><use href="#hash" x="857" y="85"/><path d="M862,100 L865,94 V100Z" fill="#444"/><path d="M867,100 L871,94 V100Z" stroke="#2f7fd0"/>
<path d="M881,89 H897 M881,98 H897" stroke="#d9343a" stroke-width="1.4"/><use href="#hash" x="886" y="86"/><use href="#hash" x="886" y="94"/><path d="M893,86 Q897,86 897,93 Q897,98 893,98"/>
</g>
<!-- xunlei -->
</svg>
<!--/RIBICONS-->
<div class="a" style="left:1318px;top:77px;width:93px;height:24px;border-radius:5px;background:linear-gradient(#e6f0fb,#c4d8f0);border:1px solid #9db4d2;overflow:hidden">
<div style="position:absolute;left:0;top:0;width:24px;height:24px;background:linear-gradient(#2b7ad6,#0c47a8)"></div>
<svg style="position:absolute;left:0;top:0" width="24" height="24"><path d="M3,7 L10,10 L18,3 L13,14 L20,13 L13,16 L11,20 L9,14 Z" fill="#e8eef6"/><ellipse cx="11" cy="20" rx="5" ry="1.2" fill="#0a3a80"/></svg>
<div style="position:absolute;left:34px;top:2px;font-size:15px;line-height:19px;font-weight:bold;font-style:italic;color:#1f4f8f;white-space:nowrap">迅雷7</div>
</div>
<!--/RIBBON-->
<div id="rbframe" class="a"></div>
<div id="pal" class="a"></div>
<!--PAL-->
<div class="a" style="left:4px;top:158px;width:250px;height:18px;background:linear-gradient(#ababab,#9c9c9c);border-radius:0 6px 0 0"></div>
<svg class="a" style="left:6px;top:160px" width="6" height="14"><g fill="#222"><rect x="1" y="1.0" width="1.2" height="1.2"/><rect x="3.2" y="1.0" width="1.2" height="1.2"/><rect x="1" y="3.5" width="1.2" height="1.2"/><rect x="3.2" y="3.5" width="1.2" height="1.2"/><rect x="1" y="6.0" width="1.2" height="1.2"/><rect x="3.2" y="6.0" width="1.2" height="1.2"/><rect x="1" y="8.5" width="1.2" height="1.2"/><rect x="3.2" y="8.5" width="1.2" height="1.2"/><rect x="1" y="11.0" width="1.2" height="1.2"/><rect x="3.2" y="11.0" width="1.2" height="1.2"/></g></svg>
<div class="a" style="left:16px;top:159px;font-size:13px;line-height:17px;font-weight:bold;color:#111;white-space:nowrap;letter-spacing:.8px">项目管理器</div>
<div class="a" style="left:4px;top:176px;width:250px;height:635px;background:#efefef;border-radius:0 6px 0 0"></div>
<div class="a" style="left:11px;top:186px;width:24px;height:25px;border:1px solid #d4d0bc;background:linear-gradient(#f4f4f0,#e6e4dc)"></div>
<div class="a" style="left:37px;top:186px;width:22px;height:25px;border:1px solid #d4d0bc;background:linear-gradient(#f4f4f0,#e6e4dc)"></div>
<div class="a" style="left:60px;top:186px;width:23px;height:25px;border:1px solid #d4d0bc;background:linear-gradient(#f4f4f0,#e6e4dc)"></div>
<div class="a" style="left:84px;top:186px;width:23px;height:25px;border:1px solid #d4d0bc;background:linear-gradient(#f4f4f0,#e6e4dc)"></div>
<div class="a" style="left:108px;top:186px;width:23px;height:25px;border:1px solid #d4d0bc;background:linear-gradient(#f4f4f0,#e6e4dc)"></div>
<div class="a" style="left:131.5px;top:186px;width:23.5px;height:25px;border:1px solid #d4d0bc;background:linear-gradient(#f4f4f0,#e6e4dc)"></div>
<div class="a" style="left:155.5px;top:186px;width:23.5px;height:25px;border:1px solid #d4d0bc;background:linear-gradient(#f4f4f0,#e6e4dc)"></div>
<div class="a" style="left:179.5px;top:186px;width:35.5px;height:25px;border:1px solid #d4d0bc;background:linear-gradient(#f4f4f0,#e6e4dc)"></div>
<div class="a" style="left:215.5px;top:186px;width:24.0px;height:25px;border:1px solid #d4d0bc;background:linear-gradient(#f4f4f0,#e6e4dc)"></div>
<svg class="a" style="left:0;top:150px" width="258" height="400">
<path d="M15,44 H20 L22,42 H30 V46 H15Z" fill="#e8c77a" stroke="#7a5a20" stroke-width=".8"/><path d="M14,45 H31 L29,56 H15Z" fill="#f0d48f" stroke="#7a5a20" stroke-width=".8"/><path d="M17,52 H27 M19,49 L25,54" stroke="#333" stroke-width="1"/>
<path d="M40,42 H46 L48,44 H56 V56 H40Z" fill="#f0d48f" stroke="#7a5a20" stroke-width=".8"/><path d="M43,47 V55 M52,47 V55 M43,51 H52" stroke="#222" stroke-width="1.2"/>
<rect x="64" y="42" width="15" height="13" fill="#cfe0f2" stroke="#1e4a86" stroke-width="1.2"/><path d="M66,51 H69 V45 H72 V52 H75 V47 H77" stroke="#222" fill="none" stroke-width="1"/>
<path d="M89,41 H99 L102,44 V57 H89Z" fill="#eef3fa" stroke="#3a5f9a" stroke-width=".8"/><path d="M91,47 A4,4 0 0 1 99,47 M99,52 A4,4 0 0 1 91,52" stroke="#2a9a3a" stroke-width="2" fill="none"/>
<path d="M112,44 L127,41 L124,56 L113,55Z" fill="#b8b4a4" stroke="#8a8678" stroke-width=".8"/><path d="M115,49 L119,52 L126,43" stroke="#666" stroke-width="1.5" fill="none"/>
<path d="M135.5,42 H142 L143,43 H151 V55 H135.5Z" fill="#fff" stroke="#222" stroke-width="1"/><path d="M139,47 A4,4 0 0 1 147,47 M147,51 A4,4 0 0 1 139,51" stroke="#1f9a3a" stroke-width="2" fill="none"/>
<rect x="162" y="44" width="10" height="10" fill="#9ab0c8" stroke="#556" stroke-width=".8"/><rect x="159" y="53" width="3" height="3" fill="#f2d01a"/><rect x="172" y="42" width="3" height="3" fill="#1a9a3a"/><rect x="172" y="54" width="3" height="3" fill="#1a6ad0"/>
<rect x="185" y="47" width="10" height="7" fill="#f2d01a" stroke="#9a7a10" stroke-width=".8"/><circle cx="196" cy="46" r="4" fill="#5aa0d8"/><path d="M186,55 H198 L195,58 H188Z" fill="#e0e4ea" stroke="#667" stroke-width=".8"/>
<path d="M207,47 H212 L209.5,50Z" fill="#555"/>
<rect x="220" y="41" width="15" height="16" rx="2.5" fill="#1f5aa8"/><text x="227.5" y="54" text-anchor="middle" font-family="Liberation Sans" font-weight="bold" font-size="13" fill="#e8f0fa">?</text>
</svg>
<div class="a" style="left:12px;top:214px;width:234px;height:24px;background:#fff;border:1px solid #7f9db9"></div>
<div class="a" style="left:14px;top:217px;font-size:13px;line-height:17px;color:#111">集尘器</div>
<div class="a" style="left:229px;top:216px;width:15px;height:20px;background:linear-gradient(#dfe8fb,#b8cbf3);border:1px solid #c2d2f2;border-radius:2px"></div>
<svg class="a" style="left:231px;top:221px" width="12" height="10"><path d="M2,3 L5.5,6.5 L9,3" stroke="#4d6185" stroke-width="2" fill="none"/></svg>
<div class="a" style="left:12px;top:238px;width:234px;height:20px;background:linear-gradient(#bdbdbd,#9f9f9f);border-bottom:1px solid #8a8a8a"></div>
<div class="a" style="left:18px;top:239px;font-size:13px;line-height:17px;font-weight:bold;color:#111">项目</div>
<svg class="a" style="left:228px;top:244px" width="12" height="8"><path d="M1,6 L6,1 L11,6Z" fill="#111"/></svg>
<div class="a" style="left:12px;top:258px;width:234px;height:212px;background:#fff;border:1px solid #d0ccb8;border-top:none;overflow:hidden">
<svg style="position:absolute;left:0;top:0" width="234" height="212"><defs><g id="dwgi"><path d="M1,0 H10 L14,4 V12 H1Z" fill="#2a5a94"/><path d="M10,0 L14,4 H10Z" fill="#a8c0dc"/><circle cx="4.5" cy="3.5" r="1.5" fill="#fff"/><path d="M0,7 L15,13 V16 H0Z" fill="#f2cc10" stroke="#c89a00" stroke-width=".7"/></g></defs>
<path d="M12.5,0 V212" stroke="#a0a0a0" stroke-dasharray="1,1"/>
<path d="M13,10.5 H23" stroke="#a0a0a0" stroke-dasharray="1,1"/>
<use href="#dwgi" x="24" y="1"/>
<path d="M13,28.5 H23" stroke="#a0a0a0" stroke-dasharray="1,1"/>
<use href="#dwgi" x="24" y="19"/>
<path d="M13,46.5 H23" stroke="#a0a0a0" stroke-dasharray="1,1"/>
<use href="#dwgi" x="24" y="37"/>
<path d="M13,64.5 H23" stroke="#a0a0a0" stroke-dasharray="1,1"/>
<use href="#dwgi" x="24" y="55"/>
<path d="M13,82.5 H23" stroke="#a0a0a0" stroke-dasharray="1,1"/>
<use href="#dwgi" x="24" y="73"/>
<path d="M13,100.5 H23" stroke="#a0a0a0" stroke-dasharray="1,1"/>
<use href="#dwgi" x="24" y="91"/>
<path d="M13,118.5 H23" stroke="#a0a0a0" stroke-dasharray="1,1"/>
<use href="#dwgi" x="24" y="109"/>
<path d="M13,136.5 H23" stroke="#a0a0a0" stroke-dasharray="1,1"/>
<use href="#dwgi" x="24" y="127"/>
<path d="M13,154.5 H23" stroke="#a0a0a0" stroke-dasharray="1,1"/>
<use href="#dwgi" x="24" y="145"/>
<path d="M13,172.5 H23" stroke="#a0a0a0" stroke-dasharray="1,1"/>
<use href="#dwgi" x="24" y="163"/>
<path d="M13,190.5 H23" stroke="#a0a0a0" stroke-dasharray="1,1"/>
<use href="#dwgi" x="24" y="181"/>
<path d="M13,208.5 H23" stroke="#a0a0a0" stroke-dasharray="1,1"/>
<use href="#dwgi" x="24" y="199"/>
</svg>
<div style="position:absolute;left:42px;top:72px;width:56px;height:18px;background:#ebe9dc"></div>
<div style="position:absolute;left:43.5px;top:1px;font-family:'Liberation Mono',monospace;font-size:12px;line-height:16px;color:#111;letter-spacing:-.1px;">018.dwg</div>
<div style="position:absolute;left:43.5px;top:19px;font-family:'Liberation Mono',monospace;font-size:12px;line-height:16px;color:#111;letter-spacing:-.1px;">019.dwg</div>
<div style="position:absolute;left:43.5px;top:37px;font-family:'Liberation Mono',monospace;font-size:12px;line-height:16px;color:#111;letter-spacing:-.1px;">020.dwg</div>
<div style="position:absolute;left:43.5px;top:55px;font-family:'Liberation Mono',monospace;font-size:12px;line-height:16px;color:#111;letter-spacing:-.1px;">021.dwg</div>
<div style="position:absolute;left:43.5px;top:73px;font-family:'Liberation Mono',monospace;font-size:12px;line-height:16px;color:#111;letter-spacing:-.1px;font-weight:bold;">022.dwg</div>
<div style="position:absolute;left:43.5px;top:91px;font-family:'Liberation Mono',monospace;font-size:12px;line-height:16px;color:#111;letter-spacing:-.1px;">023.dwg</div>
<div style="position:absolute;left:43.5px;top:109px;font-family:'Liberation Mono',monospace;font-size:12px;line-height:16px;color:#111;letter-spacing:-.1px;">024.dwg</div>
<div style="position:absolute;left:43.5px;top:127px;font-family:'Liberation Mono',monospace;font-size:12px;line-height:16px;color:#111;letter-spacing:-.1px;">025.dwg</div>
<div style="position:absolute;left:43.5px;top:145px;font-family:'Liberation Mono',monospace;font-size:12px;line-height:16px;color:#111;letter-spacing:-.1px;">T01.dwg</div>
<div style="position:absolute;left:43.5px;top:163px;font-family:'Liberation Mono',monospace;font-size:12px;line-height:16px;color:#111;letter-spacing:-.1px;">T02.dwg</div>
<div style="position:absolute;left:43.5px;top:181px;font-family:'Liberation Mono',monospace;font-size:12px;line-height:16px;color:#111;letter-spacing:-.1px;">T03.dwg</div>
<div style="position:absolute;left:43.5px;top:199px;font-family:'Liberation Mono',monospace;font-size:12px;line-height:16px;color:#111;letter-spacing:-.1px;">T04.dwg</div>
<div style="position:absolute;left:217px;top:0;width:16px;height:212px;background:#f4f4f0"></div>
<div style="position:absolute;left:217.5px;top:0;width:15px;height:16px;background:linear-gradient(#e4ecfc,#b8cbf3);border:1px solid #bccaea;border-radius:2px"></div>
<svg style="position:absolute;left:219px;top:3px" width="12" height="10"><path d="M2,7 L5.5,3.5 L9,7" stroke="#4d6185" stroke-width="2" fill="none"/></svg>
<div style="position:absolute;left:217.5px;top:125px;width:15px;height:53px;background:linear-gradient(90deg,#c8d8fa,#b4c8f4);border:1px solid #98b0e4;border-radius:2px"></div>
<svg style="position:absolute;left:222px;top:148px" width="6" height="6"><path d="M0,.5 H6 M0,2.5 H6 M0,4.5 H6" stroke="#8aa2d8"/></svg>
<div style="position:absolute;left:217.5px;top:194px;width:15px;height:16px;background:linear-gradient(#e4ecfc,#b8cbf3);border:1px solid #bccaea;border-radius:2px"></div>
<svg style="position:absolute;left:219px;top:197px" width="12" height="10"><path d="M2,3 L5.5,6.5 L9,3" stroke="#4d6185" stroke-width="2" fill="none"/></svg>
</div>
<svg class="a" style="left:124px;top:470px" width="12" height="12"><path d="M2,5 L5.5,1.5 L9,5Z M2,7 L5.5,10.5 L9,7Z" fill="#9a9a9a"/></svg>
<div class="a" style="left:12px;top:482px;width:234px;height:19px;background:linear-gradient(#bdbdbd,#9f9f9f);border:1px solid #8f8f8f"></div>
<div class="a" style="left:18px;top:483px;font-size:13px;line-height:17px;font-weight:bold;color:#111">详细信息</div>
<svg class="a" style="left:189px;top:483px" width="60" height="16"><rect x="1.5" y="1.5" width="13" height="13" fill="#dce8f8" stroke="#1e4a86" stroke-width="1.2"/><path d="M4,5 H12 M4,8 H12 M4,11 H12" stroke="#1e4a86"/><rect x="18.5" y="1.5" width="13" height="13" fill="#dce8f8" stroke="#1e4a86" stroke-width="1.2"/><circle cx="26" cy="7" r="3.5" fill="#fff" stroke="#1e4a86"/><path d="M23,10 L20,13" stroke="#c07020" stroke-width="1.6"/><path d="M39,11 L44.5,5.5 L50,11Z" fill="#111"/></svg>
<div class="a" style="left:12px;top:501px;width:234px;height:310px;background:#efefef;border-left:1px solid #d0ccb8;border-right:1px solid #d0ccb8"></div>
<div class="a dl" style="left:17px;top:502.5px">状态：可访问</div>
<div class="a dl" style="left:17px;top:518.5px">页码：<span class="m">22</span></div>
<div class="a dl" style="left:17px;top:534.5px">描述：控制线路</div>
<div class="a dl" style="left:17px;top:566.5px">文件名：<span class="m">022.dwg</span></div>
<div class="a dl" style="left:17px;top:598.5px">位置代号：<span class="m">G:\</span>新建文件夹<span class="m"> (3)\AeData</span></div>
<div class="a dl" style="left:17px;top:614.5px"><span class="m">\proj\GBdemo</span></div>
<div class="a dl" style="left:17px;top:646.5px">文件大小：<span class="m">131KB (135136 </span>字节）</div>
<div class="a dl" style="left:17px;top:662.5px">上次保存时间：<span class="m">2010-4-14 18:09:42</span></div>
<div class="a dl" style="left:17px;top:678.5px">上次编辑者：<span class="m">kudas</span></div>
<!--/PAL-->
<div id="dwg" class="a"></div>
<!--DWG-->
<svg class="a" style="left:260px;top:158px" width="1170" height="628" viewBox="260 158 1170 628" font-family="Liberation Sans">
<rect x="410.5" y="168.5" width="869" height="614" fill="none" stroke="#ff1010" stroke-width="1.1"/>
<rect x="431.5" y="189.5" width="827" height="572" fill="none" stroke="#ffffff" stroke-width="1.1"/>
<line x1="483.5" y1="182" x2="483.5" y2="189" stroke="#ff1010" stroke-width="1"/>
<line x1="483.5" y1="761.5" x2="483.5" y2="768" stroke="#ff1010" stroke-width="1"/>
<line x1="534.5" y1="182" x2="534.5" y2="189" stroke="#ff1010" stroke-width="1"/>
<line x1="534.5" y1="761.5" x2="534.5" y2="768" stroke="#ff1010" stroke-width="1"/>
<line x1="586.5" y1="182" x2="586.5" y2="189" stroke="#ff1010" stroke-width="1"/>
<line x1="586.5" y1="761.5" x2="586.5" y2="768" stroke="#ff1010" stroke-width="1"/>
<line x1="638.5" y1="182" x2="638.5" y2="189" stroke="#ff1010" stroke-width="1"/>
<line x1="638.5" y1="761.5" x2="638.5" y2="768" stroke="#ff1010" stroke-width="1"/>
<line x1="689.5" y1="182" x2="689.5" y2="189" stroke="#ff1010" stroke-width="1"/>
<line x1="689.5" y1="761.5" x2="689.5" y2="768" stroke="#ff1010" stroke-width="1"/>
<line x1="741.5" y1="182" x2="741.5" y2="189" stroke="#ff1010" stroke-width="1"/>
<line x1="741.5" y1="761.5" x2="741.5" y2="768" stroke="#ff1010" stroke-width="1"/>
<line x1="793.5" y1="182" x2="793.5" y2="189" stroke="#ff1010" stroke-width="1"/>
<line x1="793.5" y1="761.5" x2="793.5" y2="768" stroke="#ff1010" stroke-width="1"/>
<line x1="844.5" y1="182" x2="844.5" y2="189" stroke="#ff1010" stroke-width="1"/>
<line x1="844.5" y1="761.5" x2="844.5" y2="768" stroke="#ff1010" stroke-width="1"/>
<line x1="896.5" y1="182" x2="896.5" y2="189" stroke="#ff1010" stroke-width="1"/>
<line x1="896.5" y1="761.5" x2="896.5" y2="768" stroke="#ff1010" stroke-width="1"/>
<line x1="948.5" y1="182" x2="948.5" y2="189" stroke="#ff1010" stroke-width="1"/>
<line x1="948.5" y1="761.5" x2="948.5" y2="768" stroke="#ff1010" stroke-width="1"/>
<line x1="1000.5" y1="182" x2="1000.5" y2="189" stroke="#ff1010" stroke-width="1"/>
<line x1="1000.5" y1="761.5" x2="1000.5" y2="768" stroke="#ff1010" stroke-width="1"/>
<line x1="1051.5" y1="182" x2="1051.5" y2="189" stroke="#ff1010" stroke-width="1"/>
<line x1="1051.5" y1="761.5" x2="1051.5" y2="768" stroke="#ff1010" stroke-width="1"/>
<line x1="1103.5" y1="182" x2="1103.5" y2="189" stroke="#ff1010" stroke-width="1"/>
<line x1="1103.5" y1="761.5" x2="1103.5" y2="768" stroke="#ff1010" stroke-width="1"/>
<line x1="1155.5" y1="182" x2="1155.5" y2="189" stroke="#ff1010" stroke-width="1"/>
<line x1="1155.5" y1="761.5" x2="1155.5" y2="768" stroke="#ff1010" stroke-width="1"/>
<line x1="1206.5" y1="182" x2="1206.5" y2="189" stroke="#ff1010" stroke-width="1"/>
<line x1="1206.5" y1="761.5" x2="1206.5" y2="768" stroke="#ff1010" stroke-width="1"/>
<text transform="translate(456.84375,187.5) scale(0.74,1)" fill="#ff1010" font-size="6.00" text-anchor="middle" font-weight="bold" >1</text>
<text transform="translate(456.84375,767.5) scale(0.74,1)" fill="#ff1010" font-size="6.00" text-anchor="middle" font-weight="bold" >1</text>
<text transform="translate(508.53125,187.5) scale(0.74,1)" fill="#ff1010" font-size="6.00" text-anchor="middle" font-weight="bold" >2</text>
<text transform="translate(508.53125,767.5) scale(0.74,1)" fill="#ff1010" font-size="6.00" text-anchor="middle" font-weight="bold" >2</text>
<text transform="translate(560.21875,187.5) scale(0.74,1)" fill="#ff1010" font-size="6.00" text-anchor="middle" font-weight="bold" >3</text>
<text transform="translate(560.21875,767.5) scale(0.74,1)" fill="#ff1010" font-size="6.00" text-anchor="middle" font-weight="bold" >3</text>
<text transform="translate(611.90625,187.5) scale(0.74,1)" fill="#ff1010" font-size="6.00" text-anchor="middle" font-weight="bold" >4</text>
<text transform="translate(611.90625,767.5) scale(0.74,1)" fill="#ff1010" font-size="6.00" text-anchor="middle" font-weight="bold" >4</text>
<text transform="translate(663.59375,187.5) scale(0.74,1)" fill="#ff1010" font-size="6.00" text-anchor="middle" font-weight="bold" >5</text>
<text transform="translate(663.59375,767.5) scale(0.74,1)" fill="#ff1010" font-size="6.00" text-anchor="middle" font-weight="bold" >5</text>
<text transform="translate(715.28125,187.5) scale(0.74,1)" fill="#ff1010" font-size="6.00" text-anchor="middle" font-weight="bold" >6</text>
<text transform="translate(715.28125,767.5) scale(0.74,1)" fill="#ff1010" font-size="6.00" text-anchor="middle" font-weight="bold" >6</text>
<text transform="translate(766.96875,187.5) scale(0.74,1)" fill="#ff1010" font-size="6.00" text-anchor="middle" font-weight="bold" >7</text>
<text transform="translate(766.96875,767.5) scale(0.74,1)" fill="#ff1010" font-size="6.00" text-anchor="middle" font-weight="bold" >7</text>
<text transform="translate(818.65625,187.5) scale(0.74,1)" fill="#ff1010" font-size="6.00" text-anchor="middle" font-weight="bold" >8</text>
<text transform="translate(818.65625,767.5) scale(0.74,1)" fill="#ff1010" font-size="6.00" text-anchor="middle" font-weight="bold" >8</text>
<text transform="translate(870.34375,187.5) scale(0.74,1)" fill="#ff1010" font-size="6.00" text-anchor="middle" font-weight="bold" >9</text>
<text transform="translate(870.34375,767.5) scale(0.74,1)" fill="#ff1010" font-size="6.00" text-anchor="middle" font-weight="bold" >9</text>
<text transform="translate(922.03125,187.5) scale(0.74,1)" fill="#ff1010" font-size="6.00" text-anchor="middle" font-weight="bold" >10</text>
<text transform="translate(922.03125,767.5) scale(0.74,1)" fill="#ff1010" font-size="6.00" text-anchor="middle" font-weight="bold" >10</text>
<text transform="translate(973.71875,187.5) scale(0.74,1)" fill="#ff1010" font-size="6.00" text-anchor="middle" font-weight="bold" >11</text>
<text transform="translate(973.71875,767.5) scale(0.74,1)" fill="#ff1010" font-size="6.00" text-anchor="middle" font-weight="bold" >11</text>
<text transform="translate(1025.40625,187.5) scale(0.74,1)" fill="#ff1010" font-size="6.00" text-anchor="middle" font-weight="bold" >12</text>
<text transform="translate(1025.40625,767.5) scale(0.74,1)" fill="#ff1010" font-size="6.00" text-anchor="middle" font-weight="bold" >12</text>
<text transform="translate(1077.09375,187.5) scale(0.74,1)" fill="#ff1010" font-size="6.00" text-anchor="middle" font-weight="bold" >13</text>
<text transform="translate(1077.09375,767.5) scale(0.74,1)" fill="#ff1010" font-size="6.00" text-anchor="middle" font-weight="bold" >13</text>
<text transform="translate(1128.78125,187.5) scale(0.74,1)" fill="#ff1010" font-size="6.00" text-anchor="middle" font-weight="bold" >14</text>
<text transform="translate(1128.78125,767.5) scale(0.74,1)" fill="#ff1010" font-size="6.00" text-anchor="middle" font-weight="bold" >14</text>
<text transform="translate(1180.46875,187.5) scale(0.74,1)" fill="#ff1010" font-size="6.00" text-anchor="middle" font-weight="bold" >15</text>
<text transform="translate(1180.46875,767.5) scale(0.74,1)" fill="#ff1010" font-size="6.00" text-anchor="middle" font-weight="bold" >15</text>
<text transform="translate(1232.15625,187.5) scale(0.74,1)" fill="#ff1010" font-size="6.00" text-anchor="middle" font-weight="bold" >16</text>
<text transform="translate(1232.15625,767.5) scale(0.74,1)" fill="#ff1010" font-size="6.00" text-anchor="middle" font-weight="bold" >16</text>
<line x1="425" y1="260.5" x2="431" y2="260.5" stroke="#ff1010" stroke-width="1"/>
<line x1="1258.5" y1="260.5" x2="1265" y2="260.5" stroke="#ff1010" stroke-width="1"/>
<line x1="425" y1="332.5" x2="431" y2="332.5" stroke="#ff1010" stroke-width="1"/>
<line x1="1258.5" y1="332.5" x2="1265" y2="332.5" stroke="#ff1010" stroke-width="1"/>
<line x1="425" y1="404.5" x2="431" y2="404.5" stroke="#ff1010" stroke-width="1"/>
<line x1="1258.5" y1="404.5" x2="1265" y2="404.5" stroke="#ff1010" stroke-width="1"/>
<line x1="425" y1="475.5" x2="431" y2="475.5" stroke="#ff1010" stroke-width="1"/>
<line x1="1258.5" y1="475.5" x2="1265" y2="475.5" stroke="#ff1010" stroke-width="1"/>
<line x1="425" y1="546.5" x2="431" y2="546.5" stroke="#ff1010" stroke-width="1"/>
<line x1="1258.5" y1="546.5" x2="1265" y2="546.5" stroke="#ff1010" stroke-width="1"/>
<line x1="425" y1="618.5" x2="431" y2="618.5" stroke="#ff1010" stroke-width="1"/>
<line x1="1258.5" y1="618.5" x2="1265" y2="618.5" stroke="#ff1010" stroke-width="1"/>
<line x1="425" y1="690.5" x2="431" y2="690.5" stroke="#ff1010" stroke-width="1"/>
<line x1="1258.5" y1="690.5" x2="1265" y2="690.5" stroke="#ff1010" stroke-width="1"/>
<text transform="translate(428.5,226.75) scale(0.74,1)" fill="#ff1010" font-size="6.00" text-anchor="middle" font-weight="bold" >A</text>
<text transform="translate(1262,226.75) scale(0.74,1)" fill="#ff1010" font-size="6.00" text-anchor="middle" font-weight="bold" >A</text>
<text transform="translate(428.5,298.25) scale(0.74,1)" fill="#ff1010" font-size="6.00" text-anchor="middle" font-weight="bold" >B</text>
<text transform="translate(1262,298.25) scale(0.74,1)" fill="#ff1010" font-size="6.00" text-anchor="middle" font-weight="bold" >B</text>
<text transform="translate(428.5,369.75) scale(0.74,1)" fill="#ff1010" font-size="6.00" text-anchor="middle" font-weight="bold" >C</text>
<text transform="translate(1262,369.75) scale(0.74,1)" fill="#ff1010" font-size="6.00" text-anchor="middle" font-weight="bold" >C</text>
<text transform="translate(428.5,441.25) scale(0.74,1)" fill="#ff1010" font-size="6.00" text-anchor="middle" font-weight="bold" >D</text>
<text transform="translate(1262,441.25) scale(0.74,1)" fill="#ff1010" font-size="6.00" text-anchor="middle" font-weight="bold" >D</text>
<text transform="translate(428.5,512.75) scale(0.74,1)" fill="#ff1010" font-size="6.00" text-anchor="middle" font-weight="bold" >E</text>
<text transform="translate(1262,512.75) scale(0.74,1)" fill="#ff1010" font-size="6.00" text-anchor="middle" font-weight="bold" >E</text>
<text transform="translate(428.5,584.25) scale(0.74,1)" fill="#ff1010" font-size="6.00" text-anchor="middle" font-weight="bold" >F</text>
<text transform="translate(1262,584.25) scale(0.74,1)" fill="#ff1010" font-size="6.00" text-anchor="middle" font-weight="bold" >F</text>
<text transform="translate(428.5,655.75) scale(0.74,1)" fill="#ff1010" font-size="6.00" text-anchor="middle" font-weight="bold" >G</text>
<text transform="translate(1262,655.75) scale(0.74,1)" fill="#ff1010" font-size="6.00" text-anchor="middle" font-weight="bold" >G</text>
<text transform="translate(428.5,727.25) scale(0.74,1)" fill="#ff1010" font-size="6.00" text-anchor="middle" font-weight="bold" >H</text>
<text transform="translate(1262,727.25) scale(0.74,1)" fill="#ff1010" font-size="6.00" text-anchor="middle" font-weight="bold" >H</text>
<line x1="845.5" y1="182" x2="845.5" y2="196" stroke="#f0f000" stroke-width="1.2"/>
<line x1="845.5" y1="756" x2="845.5" y2="767" stroke="#f0f000" stroke-width="1.2"/>
<line x1="426" y1="475.5" x2="437" y2="475.5" stroke="#f0f000" stroke-width="1.2"/>
<path d="M428,476 Q429,473 431,473 M432,472 V478" stroke="#ff1010" stroke-width="1" fill="none"/>
<line x1="1252" y1="475.5" x2="1265" y2="475.5" stroke="#f0f000" stroke-width="1.2"/>
<path d="M793.5,761.5 V766.5 H896.5 V761.5" stroke="#f0f000" stroke-width="1.1" fill="none"/>
<line x1="803.8" y1="761.5" x2="803.8" y2="766.5" stroke="#f0f000" stroke-width="1"/>
<line x1="814.1" y1="761.5" x2="814.1" y2="766.5" stroke="#f0f000" stroke-width="1"/>
<line x1="824.4" y1="761.5" x2="824.4" y2="766.5" stroke="#f0f000" stroke-width="1"/>
<line x1="834.7" y1="761.5" x2="834.7" y2="766.5" stroke="#f0f000" stroke-width="1"/>
<line x1="845.0" y1="761.5" x2="845.0" y2="766.5" stroke="#f0f000" stroke-width="1"/>
<line x1="855.3" y1="761.5" x2="855.3" y2="766.5" stroke="#f0f000" stroke-width="1"/>
<line x1="865.6" y1="761.5" x2="865.6" y2="766.5" stroke="#f0f000" stroke-width="1"/>
<line x1="875.9" y1="761.5" x2="875.9" y2="766.5" stroke="#f0f000" stroke-width="1"/>
<line x1="886.2" y1="761.5" x2="886.2" y2="766.5" stroke="#f0f000" stroke-width="1"/>
<path d="M490,218.5 H820" stroke="#0b12f2" stroke-width="1.5" fill="none"/>
<path d="M820,219.0 H1149.5 V629.4" stroke="#0b12f2" stroke-width="1.5" fill="none"/>
<text transform="translate(469.6,222) scale(0.74,1)" fill="#ffffff" font-size="8.12" text-anchor="start" font-weight="bold" >218</text>
<path d="M481.5,215 L490,218.5 L481.5,222 Z" stroke="#ffffff" stroke-width="1.1" fill="none"/>
<text transform="translate(492.8,217) scale(0.74,1)" fill="#d4c400" font-size="6.88" text-anchor="start" font-weight="bold" >25</text>
<text transform="translate(492.8,226) scale(0.74,1)" fill="#1d8cff" font-size="6.88" text-anchor="start" font-weight="bold" >+24 VDC</text>
<text transform="translate(1031,217) scale(0.74,1)" fill="#78c81a" font-size="7.50" text-anchor="middle" font-weight="bold" >25</text>
<line x1="529.5" y1="218.5" x2="529.5" y2="612" stroke="#0b12f2" stroke-width="1.5"/>
<line x1="612.5" y1="218.5" x2="612.5" y2="612" stroke="#0b12f2" stroke-width="1.5"/>
<line x1="787.5" y1="218.5" x2="787.5" y2="612" stroke="#0b12f2" stroke-width="1.5"/>
<line x1="880.5" y1="218.5" x2="880.5" y2="612" stroke="#0b12f2" stroke-width="1.5"/>
<line x1="973.5" y1="218.5" x2="973.5" y2="612" stroke="#0b12f2" stroke-width="1.5"/>
<line x1="1056.5" y1="218.5" x2="1056.5" y2="612" stroke="#0b12f2" stroke-width="1.5"/>
<path d="M787.5,342.4 H705.5 V612" stroke="#0b12f2" stroke-width="1.5" fill="none"/>
<path d="M480,673.5 H1149.5 V643.8" stroke="#1fe01f" stroke-width="1.5" fill="none"/>
<text transform="translate(458.9,676.2) scale(0.74,1)" fill="#ffffff" font-size="7.75" text-anchor="start" font-weight="bold" >218</text>
<path d="M471.5,670 L480,673.5 L471.5,677 Z" stroke="#ffffff" stroke-width="1.1" fill="none"/>
<text transform="translate(481.8,672.2) scale(0.74,1)" fill="#d4c400" font-size="8.12" text-anchor="start" font-weight="bold" >17</text>
<text transform="translate(481.8,680.6) scale(0.74,1)" fill="#1d8cff" font-size="7.50" text-anchor="start" font-weight="bold" >0 VDC</text>
<circle cx="529.2" cy="251.8" r="3" fill="#212830" stroke="#ffffff" stroke-width="1.3"/>
<text transform="translate(525.2,243.8) scale(0.74,1)" fill="#9a9a9a" font-size="8.12" text-anchor="end" font-weight="bold" >NC</text>
<text transform="translate(525.2,251.0) scale(0.74,1)" fill="#1d8cff" font-size="8.12" text-anchor="end" font-weight="bold" >+NC-X4</text>
<text transform="translate(525.2,258.8) scale(0.74,1)" fill="#5fb89a" font-size="7.75" text-anchor="end" font-weight="bold" >201</text>
<rect x="526.5" y="274" width="6" height="32" fill="#212830"/>
<line x1="529.5" y1="274" x2="529.5" y2="285.5" stroke="#ffffff" stroke-width="1.2"/>
<path d="M522.5,283 L529.5,294.5 V306" stroke="#ffffff" stroke-width="1.2" fill="none"/>
<text transform="translate(519.5,280.6) scale(0.74,1)" fill="#9a9a9a" font-size="6.25" text-anchor="end" font-weight="bold" >M</text>
<text transform="translate(519.5,288.8) scale(0.74,1)" fill="#1d8cff" font-size="8.12" text-anchor="end" font-weight="bold" >+M-S2</text>
<text transform="translate(519.5,305.8) scale(0.74,1)" fill="#1d8cff" font-size="8.12" text-anchor="end" font-weight="bold" >LIMIT SWITCH</text>
<text transform="translate(519.5,313.2) scale(0.74,1)" fill="#1d8cff" font-size="8.12" text-anchor="end" font-weight="bold" >SWITCH</text>
<text transform="translate(527.2,322) scale(0.74,1)" fill="#78c81a" font-size="7.75" text-anchor="end" font-weight="bold" >248</text>
<rect x="526.5" y="332" width="6" height="32" fill="#212830"/>
<line x1="529.5" y1="332" x2="529.5" y2="343.5" stroke="#ffffff" stroke-width="1.2"/>
<path d="M522.5,341 L529.5,352.5 V364" stroke="#ffffff" stroke-width="1.2" fill="none"/>
<text transform="translate(519.5,338.6) scale(0.74,1)" fill="#9a9a9a" font-size="6.25" text-anchor="end" font-weight="bold" >M</text>
<text transform="translate(519.5,346.8) scale(0.74,1)" fill="#1d8cff" font-size="8.12" text-anchor="end" font-weight="bold" >+M-S3</text>
<text transform="translate(527.2,381) scale(0.74,1)" fill="#78c81a" font-size="7.75" text-anchor="end" font-weight="bold" >241</text>
<rect x="526.5" y="393" width="6" height="32" fill="#212830"/>
<line x1="529.5" y1="393" x2="529.5" y2="404.5" stroke="#ffffff" stroke-width="1.2"/>
<path d="M522.5,402 L529.5,413.5 V425" stroke="#ffffff" stroke-width="1.2" fill="none"/>
<text transform="translate(519.5,399.6) scale(0.74,1)" fill="#9a9a9a" font-size="6.25" text-anchor="end" font-weight="bold" >M</text>
<text transform="translate(519.5,407.8) scale(0.74,1)" fill="#1d8cff" font-size="8.12" text-anchor="end" font-weight="bold" >+M-S4</text>
<text transform="translate(527.2,444.5) scale(0.74,1)" fill="#78c81a" font-size="7.75" text-anchor="end" font-weight="bold" >242</text>
<rect x="526.5" y="457.2" width="6" height="32" fill="#212830"/>
<line x1="529.5" y1="457.2" x2="529.5" y2="468.7" stroke="#ffffff" stroke-width="1.2"/>
<path d="M522.5,466.2 L529.5,477.7 V489.2" stroke="#ffffff" stroke-width="1.2" fill="none"/>
<text transform="translate(519.5,463.8) scale(0.74,1)" fill="#9a9a9a" font-size="6.25" text-anchor="end" font-weight="bold" >M</text>
<text transform="translate(519.5,472.0) scale(0.74,1)" fill="#1d8cff" font-size="8.12" text-anchor="end" font-weight="bold" >+M-S5</text>
<text transform="translate(527.2,515.5) scale(0.74,1)" fill="#78c81a" font-size="7.75" text-anchor="end" font-weight="bold" >243</text>
<circle cx="529.2" cy="538.1" r="3" fill="#212830" stroke="#ffffff" stroke-width="1.3"/>
<text transform="translate(525.2,530.1) scale(0.74,1)" fill="#9a9a9a" font-size="8.12" text-anchor="end" font-weight="bold" >NC</text>
<text transform="translate(525.2,537.3000000000001) scale(0.74,1)" fill="#1d8cff" font-size="8.12" text-anchor="end" font-weight="bold" >+NC-X4</text>
<text transform="translate(525.2,545.1) scale(0.74,1)" fill="#5fb89a" font-size="7.75" text-anchor="end" font-weight="bold" >206</text>
<circle cx="612.2" cy="251.8" r="3" fill="#212830" stroke="#ffffff" stroke-width="1.3"/>
<text transform="translate(608.2,243.8) scale(0.74,1)" fill="#9a9a9a" font-size="8.12" text-anchor="end" font-weight="bold" >NC</text>
<text transform="translate(608.2,251.0) scale(0.74,1)" fill="#1d8cff" font-size="8.12" text-anchor="end" font-weight="bold" >+NC-X4</text>
<text transform="translate(608.2,258.8) scale(0.74,1)" fill="#5fb89a" font-size="7.75" text-anchor="end" font-weight="bold" >205</text>
<rect x="609.5" y="383" width="6" height="32" fill="#212830"/>
<line x1="612.5" y1="383" x2="612.5" y2="394.5" stroke="#ffffff" stroke-width="1.2"/>
<path d="M605.5,392 L612.5,403.5 V415" stroke="#ffffff" stroke-width="1.2" fill="none"/>
<text transform="translate(596.5,384.5) scale(0.74,1)" fill="#9a9a9a" font-size="8.12" text-anchor="end" font-weight="bold" >QS</text>
<text transform="translate(596.5,392) scale(0.74,1)" fill="#1d8cff" font-size="8.12" text-anchor="end" font-weight="bold" >+QS-S12</text>
<text transform="translate(611.0,385) scale(0.74,1)" fill="#5fb89a" font-size="5.62" text-anchor="end" font-weight="bold" >3</text>
<text transform="translate(611.0,414) scale(0.74,1)" fill="#5fb89a" font-size="5.62" text-anchor="end" font-weight="bold" >4</text>
<line x1="605.0" y1="399" x2="609.5" y2="399" stroke="#ffffff" stroke-width="1.2"/>
<text transform="translate(603.2,401.5) scale(0.74,1)" fill="#ffffff" font-size="8.12" text-anchor="end" font-weight="bold" >E</text>
<text transform="translate(610.2,477.5) scale(0.74,1)" fill="#78c81a" font-size="7.75" text-anchor="end" font-weight="bold" >244</text>
<circle cx="612.2" cy="538.1" r="3" fill="#212830" stroke="#ffffff" stroke-width="1.3"/>
<text transform="translate(608.2,530.1) scale(0.74,1)" fill="#9a9a9a" font-size="8.12" text-anchor="end" font-weight="bold" >NC</text>
<text transform="translate(608.2,537.3000000000001) scale(0.74,1)" fill="#1d8cff" font-size="8.12" text-anchor="end" font-weight="bold" >+NC-X4</text>
<text transform="translate(608.2,545.1) scale(0.74,1)" fill="#5fb89a" font-size="7.75" text-anchor="end" font-weight="bold" >206</text>
<rect x="784.5" y="296.7" width="6" height="21" fill="#212830"/>
<line x1="787.5" y1="296.7" x2="787.5" y2="317.2" stroke="#ffffff" stroke-width="1.2"/>
<path d="M784.5,306.2 Q785.0,302.2 788.0,302.7 Q790.5,303.7 790.5,306.2" stroke="#ffffff" stroke-width="1.2" fill="none"/>
<rect x="785.1" y="305.7" width="4.8" height="6.5" fill="#ffffff"/>
<text transform="translate(777.3,303.0) scale(0.74,1)" fill="#1d8cff" font-size="7.50" text-anchor="end" font-weight="bold" >-X1</text>
<text transform="translate(785.5,298.2) scale(0.74,1)" fill="#5fb89a" font-size="5.25" text-anchor="end" font-weight="bold" >1</text>
<rect x="784.5" y="383" width="6" height="32" fill="#212830"/>
<line x1="787.5" y1="383" x2="787.5" y2="394.5" stroke="#ffffff" stroke-width="1.2"/>
<path d="M780.5,392 L787.5,403.5 V415" stroke="#ffffff" stroke-width="1.2" fill="none"/>
<text transform="translate(771.5,384.5) scale(0.74,1)" fill="#9a9a9a" font-size="8.12" text-anchor="end" font-weight="bold" >QS</text>
<text transform="translate(771.5,392) scale(0.74,1)" fill="#1d8cff" font-size="8.12" text-anchor="end" font-weight="bold" >+QS-S13</text>
<text transform="translate(786.0,385) scale(0.74,1)" fill="#5fb89a" font-size="5.62" text-anchor="end" font-weight="bold" >3</text>
<text transform="translate(786.0,414) scale(0.74,1)" fill="#5fb89a" font-size="5.62" text-anchor="end" font-weight="bold" >4</text>
<line x1="780.0" y1="399" x2="784.5" y2="399" stroke="#ffffff" stroke-width="1.2"/>
<text transform="translate(778.2,401.5) scale(0.74,1)" fill="#ffffff" font-size="8.12" text-anchor="end" font-weight="bold" >E</text>
<text transform="translate(785.2,430) scale(0.74,1)" fill="#78c81a" font-size="7.75" text-anchor="end" font-weight="bold" >245</text>
<rect x="784.5" y="445" width="6" height="21" fill="#212830"/>
<line x1="787.5" y1="445" x2="787.5" y2="465.5" stroke="#ffffff" stroke-width="1.2"/>
<path d="M784.5,454.5 Q785.0,450.5 788.0,451 Q790.5,452 790.5,454.5" stroke="#ffffff" stroke-width="1.2" fill="none"/>
<rect x="785.1" y="454" width="4.8" height="6.5" fill="#ffffff"/>
<text transform="translate(777.3,451.3) scale(0.74,1)" fill="#1d8cff" font-size="7.50" text-anchor="end" font-weight="bold" >-X1</text>
<text transform="translate(785.5,446.5) scale(0.74,1)" fill="#5fb89a" font-size="5.25" text-anchor="end" font-weight="bold" >1</text>
<rect x="702.5" y="445" width="6" height="21" fill="#212830"/>
<line x1="705.5" y1="445" x2="705.5" y2="465.5" stroke="#ffffff" stroke-width="1.2"/>
<path d="M702.5,454.5 Q703.0,450.5 706.0,451 Q708.5,452 708.5,454.5" stroke="#ffffff" stroke-width="1.2" fill="none"/>
<rect x="703.1" y="454" width="4.8" height="6.5" fill="#ffffff"/>
<text transform="translate(695.3,451.3) scale(0.74,1)" fill="#1d8cff" font-size="7.50" text-anchor="end" font-weight="bold" >-X1</text>
<text transform="translate(703.5,446.5) scale(0.74,1)" fill="#5fb89a" font-size="5.25" text-anchor="end" font-weight="bold" >1</text>
<rect x="877.5" y="298" width="6" height="21" fill="#212830"/>
<line x1="880.5" y1="298" x2="880.5" y2="318.5" stroke="#ffffff" stroke-width="1.2"/>
<path d="M877.5,307.5 Q878.0,303.5 881.0,304 Q883.5,305 883.5,307.5" stroke="#ffffff" stroke-width="1.2" fill="none"/>
<rect x="878.1" y="307" width="4.8" height="6.5" fill="#ffffff"/>
<text transform="translate(870.3,304.3) scale(0.74,1)" fill="#1d8cff" font-size="7.50" text-anchor="end" font-weight="bold" >-X1</text>
<text transform="translate(878.5,299.5) scale(0.74,1)" fill="#5fb89a" font-size="5.25" text-anchor="end" font-weight="bold" >1</text>
<rect x="877.5" y="382" width="6" height="32" fill="#212830"/>
<line x1="880.5" y1="382" x2="880.5" y2="393.5" stroke="#ffffff" stroke-width="1.2"/>
<path d="M873.5,391 L880.5,402.5 V414" stroke="#ffffff" stroke-width="1.2" fill="none"/>
<text transform="translate(849.0,385) scale(0.74,1)" fill="#9a9a9a" font-size="8.12" text-anchor="end" font-weight="bold" >QS</text>
<text transform="translate(849.0,392) scale(0.74,1)" fill="#1d8cff" font-size="8.12" text-anchor="end" font-weight="bold" >+QS-S14</text>
<text transform="translate(879.0,384) scale(0.74,1)" fill="#5fb89a" font-size="5.62" text-anchor="end" font-weight="bold" >13</text>
<text transform="translate(879.0,413) scale(0.74,1)" fill="#5fb89a" font-size="5.62" text-anchor="end" font-weight="bold" >14</text>
<path d="M850.0,400.5 H853.5 V395.5 H857.0 M858.5,394.5 L864.0,403.5 L869.5,394.5 M869.0,398 H876.0" stroke="#ffffff" stroke-width="1.2" fill="none"/>
<text transform="translate(878.2,430) scale(0.74,1)" fill="#78c81a" font-size="7.75" text-anchor="end" font-weight="bold" >246</text>
<rect x="877.5" y="445" width="6" height="21" fill="#212830"/>
<line x1="880.5" y1="445" x2="880.5" y2="465.5" stroke="#ffffff" stroke-width="1.2"/>
<path d="M877.5,454.5 Q878.0,450.5 881.0,451 Q883.5,452 883.5,454.5" stroke="#ffffff" stroke-width="1.2" fill="none"/>
<rect x="878.1" y="454" width="4.8" height="6.5" fill="#ffffff"/>
<text transform="translate(870.3,451.3) scale(0.74,1)" fill="#1d8cff" font-size="7.50" text-anchor="end" font-weight="bold" >-X1</text>
<text transform="translate(878.5,446.5) scale(0.74,1)" fill="#5fb89a" font-size="5.25" text-anchor="end" font-weight="bold" >1</text>
<rect x="970.5" y="382" width="6" height="32" fill="#212830"/>
<line x1="973.5" y1="382" x2="973.5" y2="393.5" stroke="#ffffff" stroke-width="1.2"/>
<path d="M966.5,391 L973.5,402.5 V414" stroke="#ffffff" stroke-width="1.2" fill="none"/>
<text transform="translate(963.0,397) scale(0.74,1)" fill="#1d8cff" font-size="8.12" text-anchor="end" font-weight="bold" >-20RE0</text>
<text transform="translate(972.0,388.4) scale(0.74,1)" fill="#5fb89a" font-size="5.62" text-anchor="end" font-weight="bold" >63</text>
<text transform="translate(972.0,414) scale(0.74,1)" fill="#5fb89a" font-size="5.62" text-anchor="end" font-weight="bold" >64</text>
<text transform="translate(971.2,477.5) scale(0.74,1)" fill="#78c81a" font-size="7.75" text-anchor="end" font-weight="bold" >247</text>
<rect x="1053.5" y="382" width="6" height="32" fill="#212830"/>
<line x1="1056.5" y1="382" x2="1056.5" y2="393.5" stroke="#ffffff" stroke-width="1.2"/>
<path d="M1049.5,391 L1056.5,402.5 V414" stroke="#ffffff" stroke-width="1.2" fill="none"/>
<text transform="translate(1046.0,397) scale(0.74,1)" fill="#1d8cff" font-size="8.12" text-anchor="end" font-weight="bold" >-20RE0</text>
<text transform="translate(1055.0,388.4) scale(0.74,1)" fill="#5fb89a" font-size="5.62" text-anchor="end" font-weight="bold" >53</text>
<text transform="translate(1055.0,414) scale(0.74,1)" fill="#5fb89a" font-size="5.62" text-anchor="end" font-weight="bold" >54</text>
<text transform="translate(1054.2,477.5) scale(0.74,1)" fill="#78c81a" font-size="7.75" text-anchor="end" font-weight="bold" >248</text>
<rect x="1146.5" y="382" width="6" height="32" fill="#212830"/>
<line x1="1149.5" y1="382" x2="1149.5" y2="393.5" stroke="#ffffff" stroke-width="1.2"/>
<path d="M1142.5,391 L1149.5,402.5 V414" stroke="#ffffff" stroke-width="1.2" fill="none"/>
<text transform="translate(1139.0,390) scale(0.74,1)" fill="#9a9a9a" font-size="8.12" text-anchor="end" font-weight="bold" >NC</text>
<text transform="translate(1139.0,397.2) scale(0.74,1)" fill="#1d8cff" font-size="8.12" text-anchor="end" font-weight="bold" >-K11</text>
<text transform="translate(1148.0,384) scale(0.74,1)" fill="#5fb89a" font-size="5.62" text-anchor="end" font-weight="bold" >3</text>
<text transform="translate(1148.0,413) scale(0.74,1)" fill="#5fb89a" font-size="5.62" text-anchor="end" font-weight="bold" >4</text>
<text transform="translate(1139.0,406) scale(0.74,1)" fill="#2a9a8a" font-size="7.75" text-anchor="end" font-weight="bold" >10.0</text>
<text transform="translate(1139.0,429.2) scale(0.74,1)" fill="#ff4a1a" font-size="8.75" text-anchor="end" font-weight="bold" >MAIN DRIVE</text>
<text transform="translate(1147.2,477.5) scale(0.74,1)" fill="#78c81a" font-size="7.75" text-anchor="end" font-weight="bold" >249</text>
<circle cx="1149.2" cy="538.1" r="3" fill="#212830" stroke="#ffffff" stroke-width="1.3"/>
<text transform="translate(1145.2,537.3000000000001) scale(0.74,1)" fill="#1d8cff" font-size="8.12" text-anchor="end" font-weight="bold" >+NC-X4</text>
<text transform="translate(1145.2,545.1) scale(0.74,1)" fill="#5fb89a" font-size="7.75" text-anchor="end" font-weight="bold" >207</text>
<rect x="526.5" y="620.5" width="6" height="53" fill="#212830"/>
<line x1="529.5" y1="612" x2="529.5" y2="621" stroke="#0b12f2" stroke-width="1.5"/>
<line x1="529.5" y1="621" x2="529.5" y2="631.5" stroke="#ffffff" stroke-width="1.2"/>
<line x1="529.5" y1="641.5" x2="529.5" y2="652.5" stroke="#ffffff" stroke-width="1.2"/>
<line x1="529.5" y1="652.5" x2="529.5" y2="673.5" stroke="#1fe01f" stroke-width="1.5"/>
<rect x="519.2" y="631.5" width="20.6" height="10.2" fill="none" stroke="#ffffff" stroke-width="1.2"/>
<path d="M529.5,612.5 H563.5 V658.5 H529.5" stroke="#ffffff" stroke-width="1.2" fill="none"/>
<rect x="557.5" y="630.8" width="12" height="1.4" fill="#ffffff"/>
<path d="M563.5,631.5 L558.0,641.5 H569.0 Z" stroke="#ffffff" stroke-width="1.2" fill="#212830"/>
<text transform="translate(519.3,620) scale(0.74,1)" fill="#9a9a9a" font-size="8.12" text-anchor="end" font-weight="bold" >NC</text>
<text transform="translate(519.3,628) scale(0.74,1)" fill="#1d8cff" font-size="8.25" text-anchor="end" font-weight="bold" >-K5</text>
<text transform="translate(531.5,623.7) scale(0.74,1)" fill="#5fb89a" font-size="5.62" text-anchor="start" font-weight="bold" >2</text>
<text transform="translate(531.5,651.8) scale(0.74,1)" fill="#5fb89a" font-size="5.62" text-anchor="start" font-weight="bold" >1</text>
<text transform="translate(519.3,651.0) scale(0.74,1)" fill="#1d8cff" font-size="8.25" text-anchor="end" font-weight="bold" >LOWER</text>
<text transform="translate(519.3,658.4) scale(0.74,1)" fill="#1d8cff" font-size="8.25" text-anchor="end" font-weight="bold" >GATES</text>
<text transform="translate(519.3,665.8) scale(0.74,1)" fill="#1d8cff" font-size="8.25" text-anchor="end" font-weight="bold" >CLOSED</text>
<text transform="translate(560.9,650.3) scale(0.74,1)" fill="#1d8cff" font-size="8.25" text-anchor="end" font-weight="bold" >-D15</text>
<text transform="translate(529.9,686) scale(0.74,1)" fill="#ffffff" font-size="6.25" text-anchor="start" font-weight="bold" >9 ~~ 9 15.3</text>
<rect x="609.5" y="620.5" width="6" height="53" fill="#212830"/>
<line x1="612.5" y1="612" x2="612.5" y2="621" stroke="#0b12f2" stroke-width="1.5"/>
<line x1="612.5" y1="621" x2="612.5" y2="631.5" stroke="#ffffff" stroke-width="1.2"/>
<line x1="612.5" y1="641.5" x2="612.5" y2="652.5" stroke="#ffffff" stroke-width="1.2"/>
<line x1="612.5" y1="652.5" x2="612.5" y2="673.5" stroke="#1fe01f" stroke-width="1.5"/>
<rect x="602.2" y="631.5" width="20.6" height="10.2" fill="none" stroke="#ffffff" stroke-width="1.2"/>
<path d="M612.5,611.5 H649.5 V658.5 H612.5" stroke="#ffffff" stroke-width="1.2" fill="none"/>
<rect x="643.5" y="630.8" width="12" height="1.4" fill="#ffffff"/>
<path d="M649.5,631.5 L644.0,641.5 H655.0 Z" stroke="#ffffff" stroke-width="1.2" fill="#212830"/>
<text transform="translate(602.3,620) scale(0.74,1)" fill="#9a9a9a" font-size="8.12" text-anchor="end" font-weight="bold" >NC</text>
<text transform="translate(602.3,628) scale(0.74,1)" fill="#1d8cff" font-size="8.25" text-anchor="end" font-weight="bold" >-K6</text>
<text transform="translate(614.5,623.7) scale(0.74,1)" fill="#5fb89a" font-size="5.62" text-anchor="start" font-weight="bold" >2</text>
<text transform="translate(614.5,651.8) scale(0.74,1)" fill="#5fb89a" font-size="5.62" text-anchor="start" font-weight="bold" >1</text>
<text transform="translate(602.3,651.0) scale(0.74,1)" fill="#1d8cff" font-size="8.25" text-anchor="end" font-weight="bold" >JOG</text>
<text transform="translate(602.3,658.4) scale(0.74,1)" fill="#1d8cff" font-size="8.25" text-anchor="end" font-weight="bold" >MODE</text>
<text transform="translate(646.9,650.3) scale(0.74,1)" fill="#1d8cff" font-size="8.25" text-anchor="end" font-weight="bold" >-D16</text>
<text transform="translate(615.5,686) scale(0.74,1)" fill="#ffffff" font-size="6.25" text-anchor="start" font-weight="bold" >20 ~~ 24 15.1</text>
<text transform="translate(615.5,693) scale(0.74,1)" fill="#ffffff" font-size="6.25" text-anchor="start" font-weight="bold" >30 ~~ 34 30.6</text>
<text transform="translate(615.5,700) scale(0.74,1)" fill="#ffffff" font-size="6.25" text-anchor="start" font-weight="bold" >40 ~~ 44 30.3</text>
<text transform="translate(615.5,707) scale(0.74,1)" fill="#ffffff" font-size="6.25" text-anchor="start" font-weight="bold" >50 ~~ 54 14.3</text>
<rect x="702.5" y="620.5" width="6" height="53" fill="#212830"/>
<line x1="705.5" y1="612" x2="705.5" y2="621" stroke="#0b12f2" stroke-width="1.5"/>
<line x1="705.5" y1="621" x2="705.5" y2="631.5" stroke="#ffffff" stroke-width="1.2"/>
<line x1="705.5" y1="641.5" x2="705.5" y2="652.5" stroke="#ffffff" stroke-width="1.2"/>
<line x1="705.5" y1="652.5" x2="705.5" y2="673.5" stroke="#1fe01f" stroke-width="1.5"/>
<rect x="695.2" y="631.5" width="20.6" height="10.2" fill="none" stroke="#ffffff" stroke-width="1.2"/>
<path d="M705.5,610.5 H735.5 V658.5 H705.5" stroke="#ffffff" stroke-width="1.2" fill="none"/>
<rect x="729.5" y="630.8" width="12" height="1.4" fill="#ffffff"/>
<path d="M735.5,631.5 L730.0,641.5 H741.0 Z" stroke="#ffffff" stroke-width="1.2" fill="#212830"/>
<text transform="translate(695.3,620) scale(0.74,1)" fill="#9a9a9a" font-size="8.12" text-anchor="end" font-weight="bold" >NC</text>
<text transform="translate(695.3,628) scale(0.74,1)" fill="#1d8cff" font-size="8.25" text-anchor="end" font-weight="bold" >-K7</text>
<text transform="translate(707.5,623.7) scale(0.74,1)" fill="#5fb89a" font-size="5.62" text-anchor="start" font-weight="bold" >2</text>
<text transform="translate(707.5,651.8) scale(0.74,1)" fill="#5fb89a" font-size="5.62" text-anchor="start" font-weight="bold" >1</text>
<text transform="translate(695.3,651.0) scale(0.74,1)" fill="#1d8cff" font-size="8.25" text-anchor="end" font-weight="bold" >JOG</text>
<text transform="translate(695.3,658.4) scale(0.74,1)" fill="#1d8cff" font-size="8.25" text-anchor="end" font-weight="bold" >MODE</text>
<text transform="translate(732.9,650.3) scale(0.74,1)" fill="#1d8cff" font-size="8.25" text-anchor="end" font-weight="bold" >-D17</text>
<text transform="translate(702.0,686) scale(0.74,1)" fill="#ffffff" font-size="6.25" text-anchor="start" font-weight="bold" >13 ~~ 14 15.1</text>
<text transform="translate(702.0,693) scale(0.74,1)" fill="#ffffff" font-size="6.25" text-anchor="start" font-weight="bold" >53 ~~ 54 14.6</text>
<rect x="784.5" y="620.5" width="6" height="53" fill="#212830"/>
<line x1="787.5" y1="612" x2="787.5" y2="621" stroke="#0b12f2" stroke-width="1.5"/>
<line x1="787.5" y1="621" x2="787.5" y2="631.5" stroke="#ffffff" stroke-width="1.2"/>
<line x1="787.5" y1="641.5" x2="787.5" y2="652.5" stroke="#ffffff" stroke-width="1.2"/>
<line x1="787.5" y1="652.5" x2="787.5" y2="673.5" stroke="#1fe01f" stroke-width="1.5"/>
<rect x="777.2" y="631.5" width="20.6" height="10.2" fill="none" stroke="#ffffff" stroke-width="1.2"/>
<path d="M787.5,610.5 H819.5 V658.5 H787.5" stroke="#ffffff" stroke-width="1.2" fill="none"/>
<rect x="813.5" y="630.8" width="12" height="1.4" fill="#ffffff"/>
<path d="M819.5,631.5 L814.0,641.5 H825.0 Z" stroke="#ffffff" stroke-width="1.2" fill="#212830"/>
<text transform="translate(777.3,620) scale(0.74,1)" fill="#9a9a9a" font-size="8.12" text-anchor="end" font-weight="bold" >NC</text>
<text transform="translate(777.3,628) scale(0.74,1)" fill="#1d8cff" font-size="8.25" text-anchor="end" font-weight="bold" >-K8</text>
<text transform="translate(789.5,623.7) scale(0.74,1)" fill="#5fb89a" font-size="5.62" text-anchor="start" font-weight="bold" >2</text>
<text transform="translate(789.5,651.8) scale(0.74,1)" fill="#5fb89a" font-size="5.62" text-anchor="start" font-weight="bold" >1</text>
<text transform="translate(777.3,651.0) scale(0.74,1)" fill="#1d8cff" font-size="8.25" text-anchor="end" font-weight="bold" >REMOTE</text>
<text transform="translate(777.3,658.4) scale(0.74,1)" fill="#1d8cff" font-size="8.25" text-anchor="end" font-weight="bold" >JOG</text>
<text transform="translate(777.3,665.8) scale(0.74,1)" fill="#1d8cff" font-size="8.25" text-anchor="end" font-weight="bold" >SWITCH</text>
<text transform="translate(816.9,650.3) scale(0.74,1)" fill="#1d8cff" font-size="8.25" text-anchor="end" font-weight="bold" >-D21</text>
<text transform="translate(790.5,686) scale(0.74,1)" fill="#ffffff" font-size="6.25" text-anchor="start" font-weight="bold" >9 ~~ 9 10.1</text>
<rect x="877.5" y="620.5" width="6" height="53" fill="#212830"/>
<line x1="880.5" y1="612" x2="880.5" y2="621" stroke="#0b12f2" stroke-width="1.5"/>
<line x1="880.5" y1="621" x2="880.5" y2="631.5" stroke="#ffffff" stroke-width="1.2"/>
<line x1="880.5" y1="641.5" x2="880.5" y2="652.5" stroke="#ffffff" stroke-width="1.2"/>
<line x1="880.5" y1="652.5" x2="880.5" y2="673.5" stroke="#1fe01f" stroke-width="1.5"/>
<rect x="870.2" y="631.5" width="20.6" height="10.2" fill="none" stroke="#ffffff" stroke-width="1.2"/>
<path d="M880.5,609.5 H912.5 V659.5 H880.5" stroke="#ffffff" stroke-width="1.2" fill="none"/>
<rect x="906.5" y="630.8" width="12" height="1.4" fill="#ffffff"/>
<path d="M912.5,631.5 L907.0,641.5 H918.0 Z" stroke="#ffffff" stroke-width="1.2" fill="#212830"/>
<text transform="translate(870.3,620) scale(0.74,1)" fill="#9a9a9a" font-size="8.12" text-anchor="end" font-weight="bold" >NC</text>
<text transform="translate(870.3,628) scale(0.74,1)" fill="#1d8cff" font-size="8.25" text-anchor="end" font-weight="bold" >-K9</text>
<text transform="translate(882.5,623.7) scale(0.74,1)" fill="#5fb89a" font-size="5.62" text-anchor="start" font-weight="bold" >2</text>
<text transform="translate(882.5,651.8) scale(0.74,1)" fill="#5fb89a" font-size="5.62" text-anchor="start" font-weight="bold" >1</text>
<text transform="translate(870.3,651.0) scale(0.74,1)" fill="#1d8cff" font-size="8.25" text-anchor="end" font-weight="bold" >VACUUM</text>
<text transform="translate(870.3,658.4) scale(0.74,1)" fill="#1d8cff" font-size="8.25" text-anchor="end" font-weight="bold" >SOLENOID</text>
<text transform="translate(870.3,665.8) scale(0.74,1)" fill="#1d8cff" font-size="8.25" text-anchor="end" font-weight="bold" >VALVE</text>
<text transform="translate(909.9,650.3) scale(0.74,1)" fill="#1d8cff" font-size="8.25" text-anchor="end" font-weight="bold" >-D18</text>
<rect x="970.5" y="620.5" width="6" height="53" fill="#212830"/>
<line x1="973.5" y1="612" x2="973.5" y2="621" stroke="#0b12f2" stroke-width="1.5"/>
<line x1="973.5" y1="621" x2="973.5" y2="631.5" stroke="#ffffff" stroke-width="1.2"/>
<line x1="973.5" y1="641.5" x2="973.5" y2="652.5" stroke="#ffffff" stroke-width="1.2"/>
<line x1="973.5" y1="652.5" x2="973.5" y2="673.5" stroke="#1fe01f" stroke-width="1.5"/>
<rect x="963.2" y="631.5" width="20.6" height="10.2" fill="none" stroke="#ffffff" stroke-width="1.2"/>
<path d="M973.5,608.5 H1005.5 V659.5 H973.5" stroke="#ffffff" stroke-width="1.2" fill="none"/>
<rect x="999.5" y="630.8" width="12" height="1.4" fill="#ffffff"/>
<path d="M1005.5,631.5 L1000.0,641.5 H1011.0 Z" stroke="#ffffff" stroke-width="1.2" fill="#212830"/>
<text transform="translate(963.3,620) scale(0.74,1)" fill="#9a9a9a" font-size="8.12" text-anchor="end" font-weight="bold" >NC</text>
<text transform="translate(963.3,628) scale(0.74,1)" fill="#1d8cff" font-size="8.25" text-anchor="end" font-weight="bold" >-K10</text>
<text transform="translate(975.5,623.7) scale(0.74,1)" fill="#5fb89a" font-size="5.62" text-anchor="start" font-weight="bold" >2</text>
<text transform="translate(975.5,651.8) scale(0.74,1)" fill="#5fb89a" font-size="5.62" text-anchor="start" font-weight="bold" >1</text>
<text transform="translate(963.3,651.0) scale(0.74,1)" fill="#1d8cff" font-size="8.25" text-anchor="end" font-weight="bold" >MAIN</text>
<text transform="translate(963.3,658.4) scale(0.74,1)" fill="#1d8cff" font-size="8.25" text-anchor="end" font-weight="bold" >DRIVE</text>
<text transform="translate(963.3,665.8) scale(0.74,1)" fill="#1d8cff" font-size="8.25" text-anchor="end" font-weight="bold" >SAFETY</text>
<text transform="translate(1002.9,650.3) scale(0.74,1)" fill="#1d8cff" font-size="8.25" text-anchor="end" font-weight="bold" >-D19</text>
<text transform="translate(978.5,686) scale(0.74,1)" fill="#ffffff" font-size="6.25" text-anchor="start" font-weight="bold" >L1 ~~ T1 4.1</text>
<text transform="translate(978.5,693) scale(0.74,1)" fill="#ffffff" font-size="6.25" text-anchor="start" font-weight="bold" >L2 ~~ T2 4.1</text>
<text transform="translate(978.5,700) scale(0.74,1)" fill="#ffffff" font-size="6.25" text-anchor="start" font-weight="bold" >L3 ~~ T3 4.1</text>
<rect x="1053.5" y="620.5" width="6" height="53" fill="#212830"/>
<line x1="1056.5" y1="612" x2="1056.5" y2="621" stroke="#0b12f2" stroke-width="1.5"/>
<line x1="1056.5" y1="621" x2="1056.5" y2="631.5" stroke="#ffffff" stroke-width="1.2"/>
<line x1="1056.5" y1="641.5" x2="1056.5" y2="652.5" stroke="#ffffff" stroke-width="1.2"/>
<line x1="1056.5" y1="652.5" x2="1056.5" y2="673.5" stroke="#1fe01f" stroke-width="1.5"/>
<rect x="1046.2" y="631.5" width="20.6" height="10.2" fill="none" stroke="#ffffff" stroke-width="1.2"/>
<path d="M1056.5,608.5 H1092.5 V659.5 H1056.5" stroke="#ffffff" stroke-width="1.2" fill="none"/>
<rect x="1086.5" y="630.8" width="12" height="1.4" fill="#ffffff"/>
<path d="M1092.5,631.5 L1087.0,641.5 H1098.0 Z" stroke="#ffffff" stroke-width="1.2" fill="#212830"/>
<text transform="translate(1046.3,620) scale(0.74,1)" fill="#9a9a9a" font-size="8.12" text-anchor="end" font-weight="bold" >NC</text>
<text transform="translate(1046.3,628) scale(0.74,1)" fill="#1d8cff" font-size="8.25" text-anchor="end" font-weight="bold" >-K15</text>
<text transform="translate(1058.5,623.7) scale(0.74,1)" fill="#5fb89a" font-size="5.62" text-anchor="start" font-weight="bold" >2</text>
<text transform="translate(1058.5,651.8) scale(0.74,1)" fill="#5fb89a" font-size="5.62" text-anchor="start" font-weight="bold" >1</text>
<text transform="translate(1046.3,651.0) scale(0.74,1)" fill="#1d8cff" font-size="8.25" text-anchor="end" font-weight="bold" >POWDER</text>
<text transform="translate(1046.3,658.4) scale(0.74,1)" fill="#1d8cff" font-size="8.25" text-anchor="end" font-weight="bold" >DRIVE</text>
<text transform="translate(1046.3,665.8) scale(0.74,1)" fill="#1d8cff" font-size="8.25" text-anchor="end" font-weight="bold" >SAFETY</text>
<text transform="translate(1089.9,650.3) scale(0.74,1)" fill="#1d8cff" font-size="8.25" text-anchor="end" font-weight="bold" >-D20</text>
<text transform="translate(1060.5,686) scale(0.74,1)" fill="#ffffff" font-size="6.25" text-anchor="start" font-weight="bold" >L1 ~~ T1 5.1</text>
<text transform="translate(1060.5,693) scale(0.74,1)" fill="#ffffff" font-size="6.25" text-anchor="start" font-weight="bold" >L2 ~~ T2 5.1</text>
<text transform="translate(1060.5,700) scale(0.74,1)" fill="#ffffff" font-size="6.25" text-anchor="start" font-weight="bold" >L3 ~~ T3 5.1</text>
<rect x="1139.5" y="629.5" width="19" height="14" fill="#212830" stroke="#ffffff" stroke-width="1.2"/>
<line x1="1139.5" y1="636" x2="1158.5" y2="636" stroke="#ffffff" stroke-width="1.2"/>
<path d="M1145,636 l1,-2 l1,2 l1,-2 l1,2 l1,-2 l1,2 l1,-2 l1,2" stroke="#ffffff" stroke-width="1" fill="none"/>
<text transform="translate(1136,631) scale(0.74,1)" fill="#9a9a9a" font-size="6.88" text-anchor="end" font-weight="bold" >DS</text>
<text transform="translate(1136,638) scale(0.74,1)" fill="#1d8cff" font-size="6.88" text-anchor="end" font-weight="bold" >+DS-H4</text>
<text transform="translate(1139,650.0) scale(0.74,1)" fill="#1d8cff" font-size="7.50" text-anchor="end" font-weight="bold" >GREEN</text>
<text transform="translate(1139,656.7) scale(0.74,1)" fill="#1d8cff" font-size="7.50" text-anchor="end" font-weight="bold" >STACK</text>
<text transform="translate(1139,663.4) scale(0.74,1)" fill="#1d8cff" font-size="7.50" text-anchor="end" font-weight="bold" >LIGHT</text>
<text transform="translate(1132,672) scale(0.74,1)" fill="#78c81a" font-size="7.50" text-anchor="end" font-weight="bold" >11</text>
<text transform="translate(1151,627.5) scale(0.74,1)" fill="#5fb89a" font-size="6.25" text-anchor="start" font-weight="bold" >2</text>
<text transform="translate(1151,649) scale(0.74,1)" fill="#5fb89a" font-size="6.25" text-anchor="start" font-weight="bold" >1</text>
<g stroke="#ffffff" stroke-width="1.1" fill="none">
<path d="M1072.5,761 V703.5 H1258"/>
<line x1="1083.5" y1="703.5" x2="1083.5" y2="732.5"/>
<line x1="1093.5" y1="703.5" x2="1093.5" y2="732.5"/>
<line x1="1103.5" y1="703.5" x2="1103.5" y2="732.5"/>
<line x1="1126.5" y1="703.5" x2="1126.5" y2="732.5"/>
<line x1="1138.5" y1="703.5" x2="1138.5" y2="732.5"/>
<line x1="1155.5" y1="703.5" x2="1155.5" y2="761"/>
<line x1="1207.5" y1="703.5" x2="1207.5" y2="761"/>
<line x1="1072.5" y1="710.5" x2="1155.5" y2="710.5"/>
<line x1="1072.5" y1="718.5" x2="1155.5" y2="718.5"/>
<line x1="1072.5" y1="725.5" x2="1155.5" y2="725.5"/>
<line x1="1072.5" y1="732.5" x2="1155.5" y2="732.5"/>
<line x1="1072.5" y1="739.5" x2="1155.5" y2="739.5"/>
<line x1="1072.5" y1="746.5" x2="1155.5" y2="746.5"/>
<line x1="1072.5" y1="754.5" x2="1155.5" y2="754.5"/>
<line x1="1085.5" y1="732.5" x2="1085.5" y2="761"/>
<line x1="1114.5" y1="732.5" x2="1114.5" y2="761"/>
<line x1="1126.5" y1="732.5" x2="1126.5" y2="761"/>
<line x1="1155.5" y1="732.5" x2="1258" y2="732.5"/>
<line x1="1207.5" y1="718.5" x2="1258" y2="718.5"/>
<line x1="1155.5" y1="742.5" x2="1207.5" y2="742.5"/>
<line x1="1155.5" y1="752.5" x2="1207.5" y2="752.5"/>
<line x1="1182.5" y1="732.5" x2="1182.5" y2="761"/>
<line x1="1194.5" y1="732.5" x2="1194.5" y2="752.5"/>
<line x1="1162.5" y1="742.5" x2="1162.5" y2="752.5"/>
<line x1="1168.5" y1="742.5" x2="1168.5" y2="752.5"/>
<line x1="1175.5" y1="742.5" x2="1175.5" y2="752.5"/>
</g>
<text transform="translate(1078,731) scale(0.9,1)" fill="#ff20ff" font-size="5.2" font-weight="bold" text-anchor="middle">标记</text>
<text transform="translate(1088.5,731) scale(0.9,1)" fill="#ff20ff" font-size="5.2" font-weight="bold" text-anchor="middle">处数</text>
<text transform="translate(1098.5,731) scale(0.9,1)" fill="#ff20ff" font-size="5.2" font-weight="bold" text-anchor="middle">分区</text>
<text transform="translate(1115,731) scale(0.9,1)" fill="#ff20ff" font-size="5.2" font-weight="bold" text-anchor="middle">更改文件号</text>
<text transform="translate(1132.5,731) scale(0.9,1)" fill="#ff20ff" font-size="5.2" font-weight="bold" text-anchor="middle">签名</text>
<text transform="translate(1147,731) scale(0.9,1)" fill="#ff20ff" font-size="5.2" font-weight="bold" text-anchor="middle">日期</text>
<text transform="translate(1079,738.5) scale(0.9,1)" fill="#ff20ff" font-size="5.2" font-weight="bold" text-anchor="middle">设计</text>
<text transform="translate(1079,745.7) scale(0.9,1)" fill="#ff20ff" font-size="5.2" font-weight="bold" text-anchor="middle">校核</text>
<text transform="translate(1079,752.9) scale(0.9,1)" fill="#ff20ff" font-size="5.2" font-weight="bold" text-anchor="middle">审核</text>
<text transform="translate(1079,760.1) scale(0.9,1)" fill="#ff20ff" font-size="5.2" font-weight="bold" text-anchor="middle">批准</text>
<text transform="translate(1120.5,738.5) scale(0.9,1)" fill="#ff20ff" font-size="5.2" font-weight="bold" text-anchor="middle">工艺</text>
<text transform="translate(1120.5,745.7) scale(0.9,1)" fill="#ff20ff" font-size="5.2" font-weight="bold" text-anchor="middle">标准</text>
<text transform="translate(1120.5,752.9) scale(0.9,1)" fill="#ff20ff" font-size="5.2" font-weight="bold" text-anchor="middle">日期</text>
<text transform="translate(1169,741) scale(0.9,1)" fill="#ff20ff" font-size="5.2" font-weight="bold" text-anchor="middle">阶段标记</text>
<text transform="translate(1188.5,741) scale(0.9,1)" fill="#ff20ff" font-size="5.2" font-weight="bold" text-anchor="middle">重量</text>
<text transform="translate(1201,741) scale(0.9,1)" fill="#ff20ff" font-size="5.2" font-weight="bold" text-anchor="middle">比例</text>
<text transform="translate(1188.5,750.5) scale(0.9,1)" fill="#ff1010" font-size="5.2" font-weight="bold" text-anchor="middle">1</text>
<text transform="translate(1201,750.5) scale(0.9,1)" fill="#ff1010" font-size="5.2" font-weight="bold" text-anchor="middle">1</text>
<text transform="translate(1169,759.5) scale(0.9,1)" fill="#ff20ff" font-size="5.2" font-weight="bold" text-anchor="middle">共 1 张</text>
<text transform="translate(1195,759.5) scale(0.9,1)" fill="#ff20ff" font-size="5.2" font-weight="bold" text-anchor="middle">第 1 张</text>
<text transform="translate(1181,724) scale(1.05,0.8)" fill="#ff1010" font-size="10" text-anchor="middle" font-family="Liberation Serif">文件名称</text>
<text transform="translate(1232,717) scale(1,0.9)" fill="#ff1010" font-size="8" font-weight="bold" text-anchor="middle">图号</text>
<text transform="translate(1232,729.5) scale(1,0.9)" fill="#ff1010" font-size="8" font-weight="bold" text-anchor="middle">编号</text>
<text x="1233" y="750" fill="#ffffff" font-size="10" text-anchor="middle" font-family="Liberation Serif" font-style="italic">Autodesk</text>
<line x1="340.5" y1="220" x2="340.5" y2="292" stroke="#ffffff" stroke-width="1.1"/>
<line x1="304" y1="255.5" x2="376" y2="255.5" stroke="#ffffff" stroke-width="1.1"/>
<rect x="337.5" y="252.5" width="6" height="6" fill="none" stroke="#ffffff" stroke-width="1"/>
<rect x="527.2" y="216.2" width="4.6" height="4.6" rx="1.2" fill="#ffffff"/>
<rect x="610.2" y="216.2" width="4.6" height="4.6" rx="1.2" fill="#ffffff"/>
<rect x="785.2" y="216.2" width="4.6" height="4.6" rx="1.2" fill="#ffffff"/>
<rect x="878.2" y="216.2" width="4.6" height="4.6" rx="1.2" fill="#ffffff"/>
<rect x="971.2" y="216.2" width="4.6" height="4.6" rx="1.2" fill="#ffffff"/>
<rect x="1054.2" y="216.2" width="4.6" height="4.6" rx="1.2" fill="#ffffff"/>
<rect x="785.2" y="340.09999999999997" width="4.6" height="4.6" rx="1.2" fill="#ffffff"/>
<rect x="527.2" y="610.2" width="4.6" height="4.6" rx="1.2" fill="#ffffff"/>
<rect x="527.2" y="656.2" width="4.6" height="4.6" rx="1.2" fill="#ffffff"/>
<rect x="527.2" y="671.2" width="4.6" height="4.6" rx="1.2" fill="#ffffff"/>
<rect x="610.2" y="609.2" width="4.6" height="4.6" rx="1.2" fill="#ffffff"/>
<rect x="610.2" y="656.2" width="4.6" height="4.6" rx="1.2" fill="#ffffff"/>
<rect x="610.2" y="671.2" width="4.6" height="4.6" rx="1.2" fill="#ffffff"/>
<rect x="703.2" y="608.2" width="4.6" height="4.6" rx="1.2" fill="#ffffff"/>
<rect x="703.2" y="656.2" width="4.6" height="4.6" rx="1.2" fill="#ffffff"/>
<rect x="703.2" y="671.2" width="4.6" height="4.6" rx="1.2" fill="#ffffff"/>
<rect x="785.2" y="608.2" width="4.6" height="4.6" rx="1.2" fill="#ffffff"/>
<rect x="785.2" y="656.2" width="4.6" height="4.6" rx="1.2" fill="#ffffff"/>
<rect x="785.2" y="671.2" width="4.6" height="4.6" rx="1.2" fill="#ffffff"/>
<rect x="878.2" y="607.2" width="4.6" height="4.6" rx="1.2" fill="#ffffff"/>
<rect x="878.2" y="657.2" width="4.6" height="4.6" rx="1.2" fill="#ffffff"/>
<rect x="878.2" y="671.2" width="4.6" height="4.6" rx="1.2" fill="#ffffff"/>
<rect x="971.2" y="606.2" width="4.6" height="4.6" rx="1.2" fill="#ffffff"/>
<rect x="971.2" y="657.2" width="4.6" height="4.6" rx="1.2" fill="#ffffff"/>
<rect x="971.2" y="671.2" width="4.6" height="4.6" rx="1.2" fill="#ffffff"/>
<rect x="1054.2" y="606.2" width="4.6" height="4.6" rx="1.2" fill="#ffffff"/>
<rect x="1054.2" y="657.2" width="4.6" height="4.6" rx="1.2" fill="#ffffff"/>
<rect x="1054.2" y="671.2" width="4.6" height="4.6" rx="1.2" fill="#ffffff"/>
</svg>
<div class="a" style="left:263px;top:160px;color:#fff;white-space:pre;line-height:16px"><span class="vm">[−] [</span><span class="vk">俯视</span><span class="vm">] [</span><span class="vk">二维线框</span><span class="vm">]</span></div>
<!--/DWG-->
<div id="cmd" class="a"></div>
<!--VC-->
<svg class="a" style="left:1290px;top:160px" width="140" height="440">
<!-- viewport controls -->
<rect x="80" y="12.5" width="10.5" height="3.5" fill="#e8e8e8" stroke="#111" stroke-width=".6"/>
<rect x="104" y="7" width="9" height="9" fill="#e8e8e8" stroke="#111" stroke-width=".6"/>
<rect x="100" y="10" width="9" height="9" fill="#e8e8e8" stroke="#111" stroke-width=".6"/>
<rect x="102.5" y="12.5" width="4" height="4" fill="#111"/>
<path d="M120,7.5 L129.5,16.5 M129.5,7.5 L120,16.5" stroke="#eee" stroke-width="2.6"/>
<!-- compass ring -->
<circle cx="67" cy="94.4" r="46.5" fill="none" stroke="#474d55" stroke-width="12"/>
<rect x="44.5" y="71" width="45.5" height="45.5" fill="#b9b9b9" stroke="#a8a8a8"/>
<rect x="53" y="80" width="28" height="28" fill="#a3a7ac"/>
<text x="67" y="104" text-anchor="middle" font-size="21" fill="#5c5f64" font-family="Liberation Serif">上</text>
<text x="67" y="51" text-anchor="middle" font-size="15" fill="#cfcfcf">北</text>
<text x="67" y="150" text-anchor="middle" font-size="15" fill="#cfcfcf">南</text>
<text x="17" y="100" text-anchor="middle" font-size="15" fill="#cfcfcf">西</text>
<text x="116" y="100" text-anchor="middle" font-size="15" fill="#cfcfcf">东</text>
<rect x="43.5" y="172" width="47" height="15.5" rx="4" fill="#8d909c" stroke="#9ea1ab"/>
<text x="57" y="183.5" text-anchor="middle" font-size="10" fill="#5f626c">WCS</text>
<path d="M75,177 H83 L79,182Z" fill="none" stroke="#b7bac2" stroke-width="1"/>
<!-- nav bar -->
<rect x="105.5" y="214" width="31.5" height="211" rx="4" fill="#585d64" stroke="#4e535a"/>
<g stroke="#787e86" stroke-width="1.6" fill="none">
<circle cx="131" cy="219.5" r="3"/>
<path d="M110,230 H127 Q130,230 130,234 V244 Q130,252 121,252 H117 Q110,252 110,245 Z"/>
<circle cx="120.5" cy="240.5" r="6"/>
<path d="M120.5,240.5 L114,247 M120.5,240.5 L127,247"/>
<path d="M118,263 H124 L121,266Z" fill="#787e86" stroke="none"/>
<path d="M107,268 H135" stroke="#4e535a" stroke-width="1"/>
<path d="M114,290 Q110,282 112,280 Q114,279 116,283 V272 Q117,270 119,272 V270 Q121,268 123,270 V272 Q125,270 127,272 V274 Q129,272 131,274 V286 Q130,296 122,297 Q117,297 114,290Z"/>
<path d="M110,305 L130,325 M110,325 L122,313 M110,305 V311 M110,305 H116 M110,325 V319 M110,325 H116"/>
<circle cx="126" cy="323" r="5.5"/><path d="M130,327 L134,331" stroke-width="2.4"/>
<path d="M118,333 H124 L121,336Z" fill="#787e86" stroke="none"/>
<path d="M121,343 V368 M117,347 L121,342 L125,347"/>
<ellipse cx="121" cy="357" rx="10" ry="4"/>
<path d="M118,371 H124 L121,374Z" fill="#787e86" stroke="none"/>
<path d="M107,378 H135" stroke="#4e535a" stroke-width="1"/>
<rect x="111" y="383" width="5.5" height="5.5"/><rect x="118.5" y="383" width="5.5" height="5.5"/><rect x="126" y="383" width="5.5" height="5.5"/>
<rect x="111" y="391" width="19" height="14"/><path d="M116,394 L125,398 L116,402Z" fill="#787e86"/>
<circle cx="131" cy="418.5" r="3"/>
</g>
</svg>
<!-- command line -->
<div class="a" style="left:258px;top:792px;width:15px;height:19px;background:linear-gradient(#a8a8a8,#9a9a9a);border-radius:3px 0 0 0"></div>
<svg class="a" style="left:260px;top:794px" width="12" height="6"><g fill="#222"><rect x="1" y="1" width="1" height="1"/><rect x="3" y="1" width="1" height="1"/><rect x="5" y="1" width="1" height="1"/><rect x="7" y="1" width="1" height="1"/><rect x="9" y="1" width="1" height="1"/><rect x="1" y="3" width="1" height="1"/><rect x="3" y="3" width="1" height="1"/><rect x="5" y="3" width="1" height="1"/><rect x="7" y="3" width="1" height="1"/><rect x="9" y="3" width="1" height="1"/></g></svg>
<div class="a" style="left:273px;top:792px;width:2px;height:19px;background:#f4f4f4"></div>
<div class="a cmdl" style="left:276px;top:792px"><span class="cm">Autodesk DWG</span><span class="ck">。</span><span class="cm">  </span><span class="ck">此文件上次由</span><span class="cm"> Autodesk </span><span class="ck">应用程序或</span><span class="cm"> Autodesk </span><span class="ck">许可的应用程序保存，是可靠的</span><span class="cm"> DWG</span><span class="ck">。</span></div>
<div class="a" style="left:281px;top:807px;font-size:12px;line-height:12px;color:#111;white-space:pre">命令</div>

<!--/VC-->
</body></html>
